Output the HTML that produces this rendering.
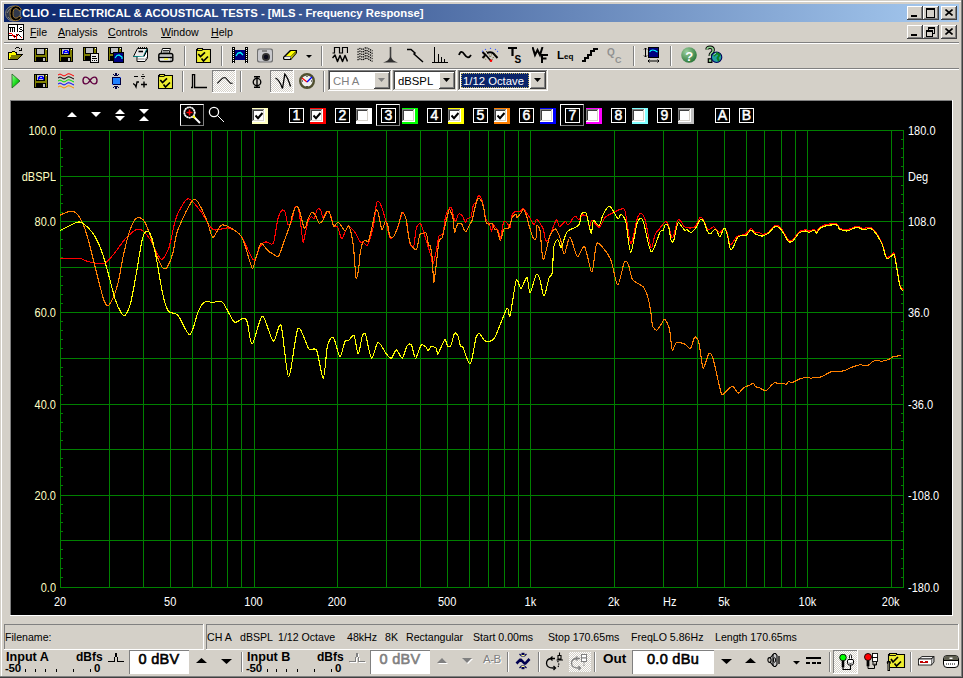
<!DOCTYPE html>
<html><head><meta charset="utf-8"><style>
html,body{margin:0;padding:0;}
body{width:963px;height:678px;overflow:hidden;position:relative;background:#D4D0C8;font-family:"Liberation Sans", sans-serif;}
svg text{font-family:"Liberation Sans", sans-serif;}
</style></head><body>
<div style="position:absolute;left:0px;top:0px;width:963px;height:678px;background:#D4D0C8;"></div><div style="position:absolute;left:1px;top:1px;width:960px;height:1px;background:#FFFFFF;"></div><div style="position:absolute;left:1px;top:1px;width:1px;height:675px;background:#FFFFFF;"></div><div style="position:absolute;left:961px;top:0px;width:1px;height:677px;background:#808080;"></div><div style="position:absolute;left:0px;top:676px;width:962px;height:1px;background:#808080;"></div><div style="position:absolute;left:962px;top:0px;width:1px;height:678px;background:#404040;"></div><div style="position:absolute;left:0px;top:677px;width:963px;height:1px;background:#404040;"></div><div style="position:absolute;left:4px;top:4px;width:955px;height:18px;background:#0A246A;background:linear-gradient(to right,#0A246A,#A6CAF0);"></div><svg style="position:absolute;left:5px;top:4px;shape-rendering:auto" width="18" height="18" viewBox="0 0 18 18" shape-rendering="crispEdges"><circle cx="8" cy="9.5" r="7.5" fill="#30384a" stroke="#7a7a78" stroke-width="1"/><path d="M3 13 Q6 17 12 16 M2 9 Q4 4 9 3" stroke="#9a9a90" fill="none" stroke-width="0.8"/><path d="M16.5 5.5 Q14 1.5 10.5 1.8 Q5 2.5 5 9.5 Q5 16.5 10.5 16.8 Q14 17 16.5 13.5 L14.2 12.2 Q13 14.2 10.8 14.2 Q8 14 8 9.5 Q8 4.8 10.8 4.5 Q13 4.6 14.2 6.8 Z" fill="#000" stroke="#a07830" stroke-width="1"/></svg><div style="position:absolute;left:22px;top:8px;font-size:11.3px;line-height:1;color:#fff;font-weight:bold;white-space:pre;letter-spacing:0px;">CLIO - ELECTRICAL &amp; ACOUSTICAL TESTS - [MLS - Frequency Response]</div><div style="position:absolute;left:907px;top:6px;width:16px;height:14px;background:#D4D0C8;"></div><div style="position:absolute;left:907px;top:6px;width:16px;height:1px;background:#FFFFFF;"></div><div style="position:absolute;left:907px;top:6px;width:1px;height:14px;background:#FFFFFF;"></div><div style="position:absolute;left:907px;top:19px;width:16px;height:1px;background:#404040;"></div><div style="position:absolute;left:922px;top:6px;width:1px;height:14px;background:#404040;"></div><div style="position:absolute;left:908px;top:18px;width:14px;height:1px;background:#808080;"></div><div style="position:absolute;left:921px;top:7px;width:1px;height:12px;background:#808080;"></div><div style="position:absolute;left:911px;top:15px;width:6px;height:2px;background:#000;"></div><div style="position:absolute;left:923px;top:6px;width:16px;height:14px;background:#D4D0C8;"></div><div style="position:absolute;left:923px;top:6px;width:16px;height:1px;background:#FFFFFF;"></div><div style="position:absolute;left:923px;top:6px;width:1px;height:14px;background:#FFFFFF;"></div><div style="position:absolute;left:923px;top:19px;width:16px;height:1px;background:#404040;"></div><div style="position:absolute;left:938px;top:6px;width:1px;height:14px;background:#404040;"></div><div style="position:absolute;left:924px;top:18px;width:14px;height:1px;background:#808080;"></div><div style="position:absolute;left:937px;top:7px;width:1px;height:12px;background:#808080;"></div><div style="position:absolute;left:926px;top:8px;width:7px;height:7px;border:1px solid #000;border-top-width:2px;"></div><div style="position:absolute;left:941px;top:6px;width:16px;height:14px;background:#D4D0C8;"></div><div style="position:absolute;left:941px;top:6px;width:16px;height:1px;background:#FFFFFF;"></div><div style="position:absolute;left:941px;top:6px;width:1px;height:14px;background:#FFFFFF;"></div><div style="position:absolute;left:941px;top:19px;width:16px;height:1px;background:#404040;"></div><div style="position:absolute;left:956px;top:6px;width:1px;height:14px;background:#404040;"></div><div style="position:absolute;left:942px;top:18px;width:14px;height:1px;background:#808080;"></div><div style="position:absolute;left:955px;top:7px;width:1px;height:12px;background:#808080;"></div><svg style="position:absolute;left:945px;top:9px;shape-rendering:auto" width="8" height="7" viewBox="0 0 8 7" shape-rendering="crispEdges"><path d="M0.5 0.5 L7.5 6.5 M7.5 0.5 L0.5 6.5" stroke="#000" stroke-width="1.6"/></svg><div style="position:absolute;left:907px;top:25px;width:16px;height:14px;background:#D4D0C8;"></div><div style="position:absolute;left:907px;top:25px;width:16px;height:1px;background:#FFFFFF;"></div><div style="position:absolute;left:907px;top:25px;width:1px;height:14px;background:#FFFFFF;"></div><div style="position:absolute;left:907px;top:38px;width:16px;height:1px;background:#404040;"></div><div style="position:absolute;left:922px;top:25px;width:1px;height:14px;background:#404040;"></div><div style="position:absolute;left:908px;top:37px;width:14px;height:1px;background:#808080;"></div><div style="position:absolute;left:921px;top:26px;width:1px;height:12px;background:#808080;"></div><div style="position:absolute;left:911px;top:34px;width:6px;height:2px;background:#000;"></div><div style="position:absolute;left:923px;top:25px;width:16px;height:14px;background:#D4D0C8;"></div><div style="position:absolute;left:923px;top:25px;width:16px;height:1px;background:#FFFFFF;"></div><div style="position:absolute;left:923px;top:25px;width:1px;height:14px;background:#FFFFFF;"></div><div style="position:absolute;left:923px;top:38px;width:16px;height:1px;background:#404040;"></div><div style="position:absolute;left:938px;top:25px;width:1px;height:14px;background:#404040;"></div><div style="position:absolute;left:924px;top:37px;width:14px;height:1px;background:#808080;"></div><div style="position:absolute;left:937px;top:26px;width:1px;height:12px;background:#808080;"></div><div style="position:absolute;left:928px;top:27px;width:5px;height:4px;border:1px solid #000;border-top-width:2px;"></div><div style="position:absolute;left:926px;top:30px;width:5px;height:4px;border:1px solid #000;border-top-width:2px;background:#D4D0C8"></div><div style="position:absolute;left:941px;top:25px;width:16px;height:14px;background:#D4D0C8;"></div><div style="position:absolute;left:941px;top:25px;width:16px;height:1px;background:#FFFFFF;"></div><div style="position:absolute;left:941px;top:25px;width:1px;height:14px;background:#FFFFFF;"></div><div style="position:absolute;left:941px;top:38px;width:16px;height:1px;background:#404040;"></div><div style="position:absolute;left:956px;top:25px;width:1px;height:14px;background:#404040;"></div><div style="position:absolute;left:942px;top:37px;width:14px;height:1px;background:#808080;"></div><div style="position:absolute;left:955px;top:26px;width:1px;height:12px;background:#808080;"></div><svg style="position:absolute;left:945px;top:28px;shape-rendering:auto" width="8" height="7" viewBox="0 0 8 7" shape-rendering="crispEdges"><path d="M0.5 0.5 L7.5 6.5 M7.5 0.5 L0.5 6.5" stroke="#000" stroke-width="1.6"/></svg><svg style="position:absolute;left:8px;top:24px;" width="16" height="16" viewBox="0 0 16 16" shape-rendering="crispEdges"><rect x="0" y="0" width="16" height="16" fill="#000"/><rect x="1" y="1" width="14" height="14" fill="#fff"/><rect x="1" y="3" width="6" height="1" fill="#000"/><rect x="2" y="3" width="1" height="5" fill="#000"/><rect x="4" y="4" width="1" height="4" fill="#000"/><rect x="6" y="4" width="1" height="4" fill="#000"/><rect x="9" y="1" width="1" height="7" fill="#000"/><rect x="12" y="3" width="2" height="1" fill="#000"/><rect x="11" y="4" width="1" height="1" fill="#000"/><rect x="12" y="5" width="2" height="1" fill="#000"/><rect x="14" y="6" width="1" height="1" fill="#000"/><rect x="11" y="7" width="3" height="1" fill="#000"/><rect x="1" y="9" width="3" height="1" fill="#f00"/><rect x="1" y="11" width="3" height="1" fill="#000"/><path d="M3.5 9.5 L7.5 14.5 M4 11.5 L6 11.5 L8 13" stroke="#f00" stroke-width="1" fill="none"/><rect x="8" y="10" width="1" height="5" fill="#f00"/><path d="M8.5 10.5 L10.5 12.5 M10 10 L13 13" stroke="#000" stroke-width="1" fill="none"/><rect x="9" y="10" width="1" height="1" fill="#f00"/><rect x="13" y="13" width="1" height="1" fill="#f00"/><rect x="6" y="12" width="2" height="1" fill="#000"/></svg><div style="position:absolute;left:30px;top:27px;font-size:10.6px;line-height:1;white-space:pre;"><u style="text-decoration-thickness:1px;text-underline-offset:1px">F</u>ile</div><div style="position:absolute;left:58px;top:27px;font-size:10.6px;line-height:1;white-space:pre;"><u style="text-decoration-thickness:1px;text-underline-offset:1px">A</u>nalysis</div><div style="position:absolute;left:108px;top:27px;font-size:10.6px;line-height:1;white-space:pre;"><u style="text-decoration-thickness:1px;text-underline-offset:1px">C</u>ontrols</div><div style="position:absolute;left:161px;top:27px;font-size:10.6px;line-height:1;white-space:pre;"><u style="text-decoration-thickness:1px;text-underline-offset:1px">W</u>indow</div><div style="position:absolute;left:211px;top:27px;font-size:10.6px;line-height:1;white-space:pre;"><u style="text-decoration-thickness:1px;text-underline-offset:1px">H</u>elp</div><div style="position:absolute;left:4px;top:42px;width:955px;height:1px;background:#808080;"></div><div style="position:absolute;left:4px;top:43px;width:955px;height:1px;background:#FFFFFF;"></div><svg style="position:absolute;left:8px;top:47px;" width="16" height="15" viewBox="0 0 16 15" shape-rendering="crispEdges"><path d="M7 2 Q9 0 11 1 L12 2 M11 3 L13 3 L13 1" stroke="#000" fill="none" stroke-width="1"/><path d="M0 5 H3 L4 4 H6 L7 5 H9 V7 H15 L10 13 H0 Z" fill="#000"/><path d="M1 6 H3 L4 5 H6 L7 6 H8 V7 L3 12 H1 Z" fill="#FFFF00"/><path d="M3 8 H14 L9.5 12 H2 Z" fill="#808000"/></svg><svg style="position:absolute;left:34px;top:48px;" width="15" height="15" viewBox="0 0 15 15" shape-rendering="crispEdges"><rect x="0" y="0" width="14" height="14" fill="#000"/><rect x="1" y="1" width="12" height="12" fill="#808000"/><rect x="2" y="0" width="9" height="7" fill="#000"/><rect x="3" y="1" width="7" height="5" fill="#C0C0C0"/><rect x="12" y="1" width="1" height="1" fill="#fff"/><rect x="2" y="9" width="10" height="5" fill="#000"/><rect x="9" y="10" width="2" height="3" fill="#C0C0C0"/></svg><svg style="position:absolute;left:59px;top:48px;" width="15" height="15" viewBox="0 0 15 15" shape-rendering="crispEdges"><rect x="0" y="0" width="14" height="14" fill="#000"/><rect x="1" y="1" width="12" height="12" fill="#808000"/><rect x="2" y="0" width="9" height="7" fill="#000"/><rect x="3" y="1" width="7" height="5" fill="#C0C0C0"/><rect x="12" y="1" width="1" height="1" fill="#fff"/><rect x="2" y="9" width="10" height="5" fill="#000"/><rect x="9" y="10" width="2" height="3" fill="#C0C0C0"/><path d="M4 6 V3 H5 V2 H8 V3 H9 V6 M4 4.5 H9" stroke="#0000FF" stroke-width="1" fill="none"/></svg><svg style="position:absolute;left:83px;top:47px;" width="15" height="15" viewBox="0 0 15 15" shape-rendering="crispEdges"><rect x="0" y="0" width="14" height="14" fill="#000"/><rect x="1" y="1" width="12" height="12" fill="#808000"/><rect x="2" y="0" width="9" height="7" fill="#000"/><rect x="3" y="1" width="7" height="5" fill="#C0C0C0"/><rect x="12" y="1" width="1" height="1" fill="#fff"/><rect x="2" y="9" width="10" height="5" fill="#000"/><rect x="9" y="10" width="2" height="3" fill="#C0C0C0"/></svg><svg style="position:absolute;left:90px;top:53px;" width="10" height="11" viewBox="0 0 10 11" shape-rendering="crispEdges"><rect x="0" y="0" width="9" height="10" fill="#000"/><rect x="1" y="1" width="7" height="8" fill="#E8E8E8"/><rect x="2" y="3" width="4" height="1" fill="#000"/><rect x="2" y="5" width="5" height="1" fill="#000"/><rect x="2" y="7" width="1" height="1" fill="#000"/><rect x="4" y="7" width="1" height="1" fill="#000"/><rect x="6" y="7" width="1" height="1" fill="#000"/></svg><svg style="position:absolute;left:108px;top:47px;" width="15" height="15" viewBox="0 0 15 15" shape-rendering="crispEdges"><rect x="0" y="0" width="14" height="14" fill="#000"/><rect x="1" y="1" width="12" height="12" fill="#808000"/><rect x="2" y="0" width="9" height="7" fill="#000"/><rect x="3" y="1" width="7" height="5" fill="#C0C0C0"/><rect x="12" y="1" width="1" height="1" fill="#fff"/><rect x="2" y="9" width="10" height="5" fill="#000"/><rect x="9" y="10" width="2" height="3" fill="#C0C0C0"/></svg><svg style="position:absolute;left:113px;top:52px;shape-rendering:auto" width="11" height="11" viewBox="0 0 11 11" shape-rendering="crispEdges"><rect x="0" y="0" width="11" height="11" fill="#000"/><rect x="1" y="1" width="9" height="9" fill="#000080"/><path d="M2 6 L4 3.5 L6 3 L9 5 V7" stroke="#00FFFF" fill="none" stroke-width="1.2"/></svg><svg style="position:absolute;left:133px;top:47px;shape-rendering:auto" width="16" height="16" viewBox="0 0 16 16" shape-rendering="crispEdges"><path d="M4.5 1.5 H14.5 L11 9.5 H0.5 Z" fill="#E8E8E8" stroke="#000" stroke-width="1"/><path d="M5 1 H14" stroke="#000" stroke-width="2" stroke-dasharray="1 1"/><path d="M5.5 4.5 H10" stroke="#000" stroke-width="1.6"/><path d="M0.5 9.5 H10.5 M14 2 L10.5 9.5" stroke="#008080" stroke-width="1.2"/><path d="M11 9.5 L14.5 2.5 V11 L12 14.5 H4 V10" fill="#fff" stroke="#000" stroke-width="1"/><path d="M4.5 12 H11.5" stroke="#808080"/><path d="M12 13 L14 10" stroke="#808080"/></svg><svg style="position:absolute;left:158px;top:48px;shape-rendering:auto" width="16" height="15" viewBox="0 0 16 15" shape-rendering="crispEdges"><path d="M4.5 0.5 H12.5 L11 5.5 H3 Z" fill="#fff" stroke="#000"/><path d="M5 2.5 H11 M4.5 4 H10.5" stroke="#000" stroke-width="0.8"/><rect x="0.8" y="5.5" width="14" height="8" rx="2" fill="#C0C0C0" stroke="#000" stroke-width="1.4"/><path d="M1 9.5 H14" stroke="#000" stroke-width="1.2"/><rect x="2" y="10.5" width="10" height="2" fill="#E8E8E8"/><rect x="6" y="10.5" width="4" height="1.2" fill="#FFFF00"/><path d="M13 6 V13" stroke="#808080" stroke-dasharray="1 1"/></svg><div style="position:absolute;left:184px;top:46px;width:1px;height:20px;background:#808080;"></div><div style="position:absolute;left:185px;top:46px;width:1px;height:20px;background:#FFFFFF;"></div><svg style="position:absolute;left:196px;top:48px;shape-rendering:auto" width="15" height="15" viewBox="0 0 15 15" shape-rendering="crispEdges"><path d="M0.5 1.5 V14.5 H14.5 V1.5 H6.5 V0.5 H1.5 V1.5 Z" fill="#EEEE30" stroke="#000" stroke-width="1.1"/><path d="M1 2.5 H6.5" stroke="#000" stroke-width="0.9"/><path d="M2.3 6 L4.5 8.5 L9 4.3 M5.5 10.5 L7.5 13 L12 8.5" stroke="#000" stroke-width="1.7" fill="none"/></svg><div style="position:absolute;left:221px;top:46px;width:1px;height:20px;background:#808080;"></div><div style="position:absolute;left:222px;top:46px;width:1px;height:20px;background:#FFFFFF;"></div><svg style="position:absolute;left:232px;top:47px;shape-rendering:auto" width="16" height="16" viewBox="0 0 16 16" shape-rendering="crispEdges"><rect x="0" y="0" width="3" height="16" fill="#000"/><rect x="13" y="0" width="3" height="16" fill="#000"/><rect x="1" y="1" width="1" height="1" fill="#fff"/><rect x="14" y="1" width="1" height="1" fill="#fff"/><rect x="1" y="3" width="1" height="1" fill="#fff"/><rect x="14" y="3" width="1" height="1" fill="#fff"/><rect x="1" y="5" width="1" height="1" fill="#fff"/><rect x="14" y="5" width="1" height="1" fill="#fff"/><rect x="1" y="7" width="1" height="1" fill="#fff"/><rect x="14" y="7" width="1" height="1" fill="#fff"/><rect x="1" y="9" width="1" height="1" fill="#fff"/><rect x="14" y="9" width="1" height="1" fill="#fff"/><rect x="1" y="11" width="1" height="1" fill="#fff"/><rect x="14" y="11" width="1" height="1" fill="#fff"/><rect x="1" y="13" width="1" height="1" fill="#fff"/><rect x="14" y="13" width="1" height="1" fill="#fff"/><rect x="1" y="15" width="1" height="1" fill="#fff"/><rect x="14" y="15" width="1" height="1" fill="#fff"/><rect x="3" y="3" width="10" height="10" fill="#000080"/><path d="M4 9 L6 6 L8.5 5.5 L11 8" stroke="#00FFFF" fill="none" stroke-width="1.3"/></svg><svg style="position:absolute;left:257px;top:48px;shape-rendering:auto" width="16" height="15" viewBox="0 0 16 15" shape-rendering="crispEdges"><rect x="0" y="0.5" width="16" height="14" rx="2" fill="#707070"/><rect x="1" y="1.5" width="14" height="12" rx="2" fill="#C8C8CC"/><rect x="5" y="2" width="5" height="2" fill="#888"/><circle cx="9" cy="9" r="4" fill="#333"/><circle cx="9" cy="9" r="2.2" fill="#0a0a1a"/></svg><svg style="position:absolute;left:282px;top:49px;shape-rendering:auto" width="16" height="12" viewBox="0 0 16 12" shape-rendering="crispEdges"><path d="M1 8 L8 1 H15 L15 4 L9 11 H2 L1 10 Z" fill="#000"/><path d="M4 7 L9 2 H14 L9 7 Z" fill="#FFFF00"/><path d="M2 8.5 L4 7.5 H9 L8 10 H2.5 Z" fill="#E8E8E8"/><path d="M9 7 L14 3 V4 L9 10 Z" fill="#C0C000"/></svg><svg style="position:absolute;left:306px;top:55px;shape-rendering:auto" width="6" height="3" viewBox="0 0 6 3" shape-rendering="crispEdges"><path d="M0 0 H6 L3 3 Z" fill="#000"/></svg><div style="position:absolute;left:321px;top:46px;width:1px;height:20px;background:#808080;"></div><div style="position:absolute;left:322px;top:46px;width:1px;height:20px;background:#FFFFFF;"></div><svg style="position:absolute;left:332px;top:47px;shape-rendering:auto" width="16" height="16" viewBox="0 0 16 16" shape-rendering="crispEdges"><path d="M0.5 6 H2.5 V0.5 H7.5 V6 H10.5 V0.5 H15.5 V6" stroke="#000" fill="none" stroke-width="1.2"/><path d="M0.5 11 L3 8 L5.5 14.5 L8 8.5 L10.5 14.5 L13 8.5 L15.5 14.5" stroke="#000" fill="none" stroke-width="1.5" stroke-linejoin="round"/></svg><svg style="position:absolute;left:357px;top:47px;shape-rendering:auto" width="16" height="16" viewBox="0 0 16 16" shape-rendering="crispEdges"><path d="M0.5 2.5 L3 1.5 L6 2.5 L9 0.5 L12 2.0 L15.5 4.0" stroke="#000" fill="none" stroke-dasharray="1.2 0.8" stroke-width="1.3"/><path d="M0.5 5.1 L3 4.1 L6 5.1 L9 3.1 L12 4.6 L15.5 6.6" stroke="#000" fill="none" stroke-dasharray="1.2 0.8" stroke-width="1.3"/><path d="M0.5 7.7 L3 6.7 L6 7.7 L9 5.7 L12 7.2 L15.5 9.2" stroke="#000" fill="none" stroke-dasharray="1.2 0.8" stroke-width="1.3"/><path d="M0.5 10.3 L3 9.3 L6 10.3 L9 8.3 L12 9.8 L15.5 11.8" stroke="#000" fill="none" stroke-dasharray="1.2 0.8" stroke-width="1.3"/><path d="M0.5 12.9 L3 11.9 L6 12.9 L9 10.9 L12 12.4 L15.5 14.4" stroke="#000" fill="none" stroke-dasharray="1.2 0.8" stroke-width="1.3"/></svg><svg style="position:absolute;left:383px;top:47px;shape-rendering:auto" width="15" height="16" viewBox="0 0 15 16" shape-rendering="crispEdges"><path d="M7.5 0 V13" stroke="#404040" stroke-width="1.6"/><path d="M0 15.5 Q6 14 7.5 9 Q9 14 15 15.5 Z" fill="#303030"/></svg><svg style="position:absolute;left:407px;top:48px;shape-rendering:auto" width="17" height="15" viewBox="0 0 17 15" shape-rendering="crispEdges"><path d="M0 1.5 H4 L8 5 L7 6 L16 14" stroke="#000" fill="none" stroke-width="1.5"/></svg><svg style="position:absolute;left:432px;top:47px;" width="16" height="16" viewBox="0 0 16 16" shape-rendering="crispEdges"><path d="M2.5 0 V15 M0 15.5 H16 M6.5 7 V15 M9.5 10 V15 M12.5 12 V15" stroke="#000" fill="none"/></svg><svg style="position:absolute;left:458px;top:50px;shape-rendering:auto" width="14" height="10" viewBox="0 0 14 10" shape-rendering="crispEdges"><path d="M1 5 Q3 -1 6.5 4.5 T13 5" stroke="#000" fill="none" stroke-width="1.8"/></svg><svg style="position:absolute;left:478px;top:44px;shape-rendering:auto" width="22" height="20" viewBox="0 0 22 20" shape-rendering="crispEdges"><path d="M4.5 8 L7 10.5 M4.5 14 L7.5 11 M9 9 Q12 7.5 15 9 M15 9 L19.5 14" stroke="#000" stroke-width="2" fill="none"/><path d="M7 10 L13 17" stroke="#000" stroke-width="1.6"/><path d="M6 13 L8 16 M8.5 7 V9 M11 10.5 L12 13 M13.5 10.5 L12.5 13 M17 10 L18 12 M15.5 13 L14 16" stroke="#505020" stroke-width="1" stroke-dasharray="1 1"/><circle cx="13" cy="16.8" r="1.3" fill="#f00"/><circle cx="4.5" cy="7.3" r="0.7" fill="#4060ff"/><circle cx="7.5" cy="5.5" r="0.7" fill="#4060ff"/><circle cx="12.5" cy="4.4" r="0.7" fill="#4060ff"/><circle cx="17.5" cy="5.5" r="0.7" fill="#4060ff"/><circle cx="19.5" cy="7.5" r="0.7" fill="#4060ff"/></svg><svg style="position:absolute;left:508px;top:47px;shape-rendering:auto" width="16" height="16" viewBox="0 0 16 16" shape-rendering="crispEdges"><path d="M0 1 H9 M4.5 1 V9" stroke="#000" stroke-width="2.2" fill="none"/><text x="6.5" y="16" font-family="Liberation Sans" font-weight="bold" font-size="10" fill="#000">S</text></svg><svg style="position:absolute;left:532px;top:47px;shape-rendering:auto" width="17" height="17" viewBox="0 0 17 17" shape-rendering="crispEdges"><path d="M0.5 0 L3 8 L5.5 3 L8 8 L10.5 0" stroke="#000" stroke-width="2" fill="none"/><path d="M10 16 V8 H16 M10 11.5 H14.5" stroke="#000" stroke-width="2" fill="none"/></svg><svg style="position:absolute;left:557px;top:49px;shape-rendering:auto" width="17" height="13" viewBox="0 0 17 13" shape-rendering="crispEdges"><text x="0" y="10" font-family="Liberation Sans" font-weight="bold" font-size="11.5" fill="#000">L</text><text x="7" y="10" font-family="Liberation Sans" font-weight="bold" font-size="8" fill="#000">eq</text></svg><svg style="position:absolute;left:582px;top:48px;" width="16" height="15" viewBox="0 0 16 15" shape-rendering="crispEdges"><path d="M0 13 H3 V10 H6 V6.5 H9 V3 H12 V1 H16" stroke="#000" stroke-width="2" fill="none"/></svg><svg style="position:absolute;left:607px;top:47px;shape-rendering:auto" width="16" height="17" viewBox="0 0 16 17" shape-rendering="crispEdges"><text x="0" y="9" font-family="Liberation Sans" font-weight="bold" font-size="10" fill="#909090">Q</text><text x="8" y="16" font-family="Liberation Sans" font-weight="bold" font-size="9" fill="#909090">C</text></svg><div style="position:absolute;left:633px;top:46px;width:1px;height:20px;background:#808080;"></div><div style="position:absolute;left:634px;top:46px;width:1px;height:20px;background:#FFFFFF;"></div><svg style="position:absolute;left:643px;top:47px;shape-rendering:auto" width="17" height="16" viewBox="0 0 17 16" shape-rendering="crispEdges"><rect x="5" y="0" width="11" height="11" fill="#000"/><rect x="6" y="1" width="9" height="9" fill="#000080"/><path d="M6.5 5 Q9 1 14.5 5" stroke="#00FFFF" fill="none" stroke-width="1.2"/><path d="M2.5 1 V10 M1 2.5 L2.5 1 L4 2.5 M1 8.5 L2.5 10 L4 8.5" stroke="#000" fill="none"/><path d="M5 14 H16 M6.5 12.5 L5 14 L6.5 15.5 M14.5 12.5 L16 14 L14.5 15.5" stroke="#000" fill="none"/></svg><div style="position:absolute;left:670px;top:46px;width:1px;height:20px;background:#808080;"></div><div style="position:absolute;left:671px;top:46px;width:1px;height:20px;background:#FFFFFF;"></div><svg style="position:absolute;left:681px;top:47px;shape-rendering:auto" width="16" height="16" viewBox="0 0 16 16" shape-rendering="crispEdges"><defs><radialGradient id="hg" cx="0.35" cy="0.3" r="0.8"><stop offset="0" stop-color="#9ed09e"/><stop offset="1" stop-color="#1f6f2f"/></radialGradient></defs><circle cx="8" cy="8" r="7.8" fill="url(#hg)"/><text x="4.2" y="13.5" font-family="Liberation Sans" font-weight="bold" font-size="13" fill="#fff">?</text></svg><svg style="position:absolute;left:702px;top:44px;shape-rendering:auto" width="22" height="20" viewBox="0 0 22 20" shape-rendering="crispEdges"><path d="M5 5.5 Q5 3.2 8 3.2 Q11.2 3.2 11.2 6 Q11.2 8 9 9.5 Q8.2 10.2 8.2 12" stroke="#000" stroke-width="3.4" fill="none"/><path d="M5 5.5 Q5 3.2 8 3.2 Q11.2 3.2 11.2 6 Q11.2 8 9 9.5 Q8.2 10.2 8.2 12" stroke="#90D090" stroke-width="1.6" fill="none"/><rect x="6.3" y="14.8" width="3.6" height="3.6" fill="#90D090" stroke="#000" stroke-width="1.2"/><circle cx="14.6" cy="13.3" r="5.2" fill="#20A0A0" stroke="#000060" stroke-width="1.1"/><path d="M11.5 12 L15 9 L17.5 11 L15.5 14 L17 17" stroke="#108020" stroke-width="2" fill="none"/><path d="M11.5 11 L14 9" stroke="#C0E0FF" stroke-width="0.8"/></svg><div style="position:absolute;left:4px;top:68px;width:955px;height:1px;background:#808080;"></div><div style="position:absolute;left:4px;top:69px;width:955px;height:1px;background:#FFFFFF;"></div><svg style="position:absolute;left:11px;top:73px;shape-rendering:auto" width="11" height="16" viewBox="0 0 11 16" shape-rendering="crispEdges"><defs><linearGradient id="pg" x1="0" y1="0" x2="1" y2="1"><stop offset="0" stop-color="#A0FFA0"/><stop offset="0.5" stop-color="#20E020"/><stop offset="1" stop-color="#008000"/></linearGradient></defs><path d="M1 1 L9 8 L1 15 Z" fill="url(#pg)" stroke="#206020" stroke-width="0.8"/></svg><svg style="position:absolute;left:34px;top:74px;" width="15" height="15" viewBox="0 0 15 15" shape-rendering="crispEdges"><rect x="0" y="0" width="14" height="14" fill="#000"/><rect x="1" y="1" width="12" height="12" fill="#808000"/><rect x="2" y="0" width="9" height="7" fill="#000"/><rect x="3" y="1" width="7" height="5" fill="#C0C0C0"/><rect x="12" y="1" width="1" height="1" fill="#fff"/><rect x="2" y="9" width="10" height="5" fill="#000"/><rect x="9" y="10" width="2" height="3" fill="#C0C0C0"/><path d="M4 6 V3 H5 V2 H8 V3 H9 V6 M4 4.5 H9" stroke="#0000FF" stroke-width="1" fill="none"/></svg><svg style="position:absolute;left:58px;top:73px;shape-rendering:auto" width="16" height="16" viewBox="0 0 16 16" shape-rendering="crispEdges"><path d="M0 2 Q2 0 4 2 T8 2 T12 1 T16 3" stroke="#FF0000" fill="none" stroke-width="1"/><path d="M0 5 Q2 3 4 5 T8 5 T12 4 T16 6" stroke="#000000" fill="none" stroke-width="1"/><path d="M0 8 Q2 6 4 8 T8 8 T12 7 T16 9" stroke="#00E000" fill="none" stroke-width="1"/><path d="M0 11 Q2 9 4 11 T8 11 T12 10 T16 12" stroke="#0000FF" fill="none" stroke-width="1"/><path d="M0 14 Q2 12 4 14 T8 14 T12 13 T16 15" stroke="#FF9000" fill="none" stroke-width="1"/></svg><svg style="position:absolute;left:82px;top:75px;shape-rendering:auto" width="16" height="11" viewBox="0 0 16 11" shape-rendering="crispEdges"><path d="M8 5.5 C5 0.5 1 1.5 1 5.5 C1 9.5 5 10.5 8 5.5 C11 0.5 15 1.5 15 5.5 C15 9.5 11 10.5 8 5.5 Z" stroke="#600040" fill="none" stroke-width="1.4"/></svg><svg style="position:absolute;left:111px;top:72px;" width="11" height="18" viewBox="0 0 11 18" shape-rendering="crispEdges"><rect x="4" y="1" width="2" height="2" fill="#000040"/><rect x="2" y="2" width="1" height="1" fill="#000040"/><rect x="7" y="2" width="1" height="1" fill="#000040"/><rect x="3" y="3" width="4" height="1" fill="#000040"/><rect x="1" y="5" width="9" height="8" fill="#000040"/><rect x="2" y="6" width="7" height="6" fill="#2080FF"/><rect x="9" y="5" width="1" height="1" fill="#4060FF"/><rect x="1" y="12" width="1" height="1" fill="#4060FF"/><rect x="3" y="14" width="4" height="1" fill="#000040"/><rect x="2" y="15" width="1" height="1" fill="#000040"/><rect x="7" y="15" width="1" height="1" fill="#000040"/><rect x="4" y="15" width="2" height="2" fill="#000040"/></svg><svg style="position:absolute;left:133px;top:74px;shape-rendering:auto" width="15" height="15" viewBox="0 0 15 15" shape-rendering="crispEdges"><path d="M1 2.5 H5 M8 2.5 H12 M10 0 V1 M10 4 V5" stroke="#000" stroke-width="1.2"/><path d="M0 9.5 L2 11 L3 13 L4 8 H6" stroke="#000" stroke-width="1.3" fill="none"/><path d="M8 10.5 H14 M11 7.5 V13.5" stroke="#000" stroke-width="1.4"/></svg><svg style="position:absolute;left:158px;top:74px;shape-rendering:auto" width="15" height="15" viewBox="0 0 15 15" shape-rendering="crispEdges"><path d="M0.5 1.5 V14.5 H14.5 V1.5 H6.5 V0.5 H1.5 V1.5 Z" fill="#EEEE30" stroke="#000" stroke-width="1.1"/><path d="M1 2.5 H6.5" stroke="#000" stroke-width="0.9"/><path d="M2.3 6 L4.5 8.5 L9 4.3 M5.5 10.5 L7.5 13 L12 8.5" stroke="#000" stroke-width="1.7" fill="none"/></svg><div style="position:absolute;left:182px;top:71px;width:1px;height:21px;background:#808080;"></div><div style="position:absolute;left:183px;top:71px;width:1px;height:21px;background:#FFFFFF;"></div><svg style="position:absolute;left:191px;top:74px;shape-rendering:auto" width="17" height="15" viewBox="0 0 17 15" shape-rendering="crispEdges"><path d="M0 13.5 H1.5 V0.7 H3.6 V13.5 H16" stroke="#000" fill="none" stroke-width="1.3"/></svg><div style="position:absolute;left:212px;top:70px;width:24px;height:23px;background:#D4D0C8;background-image:repeating-conic-gradient(#fff 0 25%,#D4D0C8 0 50%);background-size:2px 2px;"></div><div style="position:absolute;left:212px;top:70px;width:24px;height:1px;background:#808080;"></div><div style="position:absolute;left:212px;top:70px;width:1px;height:23px;background:#808080;"></div><div style="position:absolute;left:212px;top:92px;width:24px;height:1px;background:#FFFFFF;"></div><div style="position:absolute;left:235px;top:70px;width:1px;height:23px;background:#FFFFFF;"></div><svg style="position:absolute;left:216px;top:74px;shape-rendering:auto" width="18" height="12" viewBox="0 0 18 12" shape-rendering="crispEdges"><path d="M1.3 9.3 L6.5 4.2 L7.5 3.7 L9.5 3.7 L14.5 9.3 L16.6 9.3" stroke="#000" fill="none" stroke-width="1.1"/></svg><div style="position:absolute;left:240px;top:71px;width:1px;height:21px;background:#808080;"></div><div style="position:absolute;left:241px;top:71px;width:1px;height:21px;background:#FFFFFF;"></div><svg style="position:absolute;left:252px;top:76px;shape-rendering:auto" width="10" height="12" viewBox="0 0 10 12" shape-rendering="crispEdges"><path d="M2 0.7 H8 M2 11.3 H8 M5 0 V12" stroke="#000" stroke-width="1.4"/><ellipse cx="5" cy="6" rx="3.8" ry="3.6" stroke="#000" fill="none" stroke-width="1.3"/></svg><div style="position:absolute;left:270px;top:70px;width:24px;height:23px;background:#D4D0C8;background-image:repeating-conic-gradient(#fff 0 25%,#D4D0C8 0 50%);background-size:2px 2px;"></div><div style="position:absolute;left:270px;top:70px;width:24px;height:1px;background:#808080;"></div><div style="position:absolute;left:270px;top:70px;width:1px;height:23px;background:#808080;"></div><div style="position:absolute;left:270px;top:92px;width:24px;height:1px;background:#FFFFFF;"></div><div style="position:absolute;left:293px;top:70px;width:1px;height:23px;background:#FFFFFF;"></div><svg style="position:absolute;left:274px;top:73px;shape-rendering:auto" width="18" height="17" viewBox="0 0 18 17" shape-rendering="crispEdges"><path d="M1.5 5 Q5.5 7 8.5 15.5 L10.8 1.2 Q14 5 16.5 13.5" stroke="#000" fill="none" stroke-width="1.3"/></svg><svg style="position:absolute;left:299px;top:73px;shape-rendering:auto" width="16" height="16" viewBox="0 0 16 16" shape-rendering="crispEdges"><circle cx="8" cy="8" r="6.8" fill="#F0F0F0" stroke="#505030" stroke-width="2.4"/><path d="M3 5 L8 9" stroke="#f00" stroke-width="1.2"/><path d="M8 9 L13 4" stroke="#00f" stroke-width="1.2"/><path d="M8 3 V4 M8 13 V14 M3 8 H4 M12 8 H13" stroke="#000"/></svg><div style="position:absolute;left:323px;top:71px;width:1px;height:21px;background:#808080;"></div><div style="position:absolute;left:324px;top:71px;width:1px;height:21px;background:#FFFFFF;"></div><div style="position:absolute;left:328px;top:70px;width:64px;height:21px;background:#fff;"></div><div style="position:absolute;left:328px;top:70px;width:64px;height:1px;background:#808080;"></div><div style="position:absolute;left:328px;top:70px;width:1px;height:21px;background:#808080;"></div><div style="position:absolute;left:329px;top:71px;width:62px;height:1px;background:#404040;"></div><div style="position:absolute;left:329px;top:71px;width:1px;height:19px;background:#404040;"></div><div style="position:absolute;left:328px;top:90px;width:64px;height:1px;background:#FFFFFF;"></div><div style="position:absolute;left:391px;top:70px;width:1px;height:21px;background:#FFFFFF;"></div><div style="position:absolute;left:329px;top:89px;width:62px;height:1px;background:#D4D0C8;"></div><div style="position:absolute;left:390px;top:71px;width:1px;height:19px;background:#D4D0C8;"></div><div style="position:absolute;left:374px;top:72px;width:16px;height:17px;background:#D4D0C8;"></div><div style="position:absolute;left:374px;top:72px;width:16px;height:1px;background:#FFFFFF;"></div><div style="position:absolute;left:374px;top:72px;width:1px;height:17px;background:#FFFFFF;"></div><div style="position:absolute;left:374px;top:88px;width:16px;height:1px;background:#404040;"></div><div style="position:absolute;left:389px;top:72px;width:1px;height:17px;background:#404040;"></div><div style="position:absolute;left:375px;top:87px;width:14px;height:1px;background:#808080;"></div><div style="position:absolute;left:388px;top:73px;width:1px;height:15px;background:#808080;"></div><svg style="position:absolute;left:378px;top:78px;shape-rendering:auto" width="7" height="4" viewBox="0 0 7 4" shape-rendering="crispEdges"><path d="M0 0 H7 L3.5 4 Z" fill="#808080"/></svg><div style="position:absolute;left:333px;top:76px;font-size:11.3px;line-height:1;color:#808080;font-weight:normal;white-space:pre;">CH A</div><div style="position:absolute;left:393px;top:70px;width:64px;height:21px;background:#fff;"></div><div style="position:absolute;left:393px;top:70px;width:64px;height:1px;background:#808080;"></div><div style="position:absolute;left:393px;top:70px;width:1px;height:21px;background:#808080;"></div><div style="position:absolute;left:394px;top:71px;width:62px;height:1px;background:#404040;"></div><div style="position:absolute;left:394px;top:71px;width:1px;height:19px;background:#404040;"></div><div style="position:absolute;left:393px;top:90px;width:64px;height:1px;background:#FFFFFF;"></div><div style="position:absolute;left:456px;top:70px;width:1px;height:21px;background:#FFFFFF;"></div><div style="position:absolute;left:394px;top:89px;width:62px;height:1px;background:#D4D0C8;"></div><div style="position:absolute;left:455px;top:71px;width:1px;height:19px;background:#D4D0C8;"></div><div style="position:absolute;left:439px;top:72px;width:16px;height:17px;background:#D4D0C8;"></div><div style="position:absolute;left:439px;top:72px;width:16px;height:1px;background:#FFFFFF;"></div><div style="position:absolute;left:439px;top:72px;width:1px;height:17px;background:#FFFFFF;"></div><div style="position:absolute;left:439px;top:88px;width:16px;height:1px;background:#404040;"></div><div style="position:absolute;left:454px;top:72px;width:1px;height:17px;background:#404040;"></div><div style="position:absolute;left:440px;top:87px;width:14px;height:1px;background:#808080;"></div><div style="position:absolute;left:453px;top:73px;width:1px;height:15px;background:#808080;"></div><svg style="position:absolute;left:443px;top:78px;shape-rendering:auto" width="7" height="4" viewBox="0 0 7 4" shape-rendering="crispEdges"><path d="M0 0 H7 L3.5 4 Z" fill="#000"/></svg><div style="position:absolute;left:398px;top:76px;font-size:11.3px;line-height:1;color:#000;font-weight:normal;white-space:pre;">dBSPL</div><div style="position:absolute;left:458px;top:70px;width:90px;height:21px;background:#fff;"></div><div style="position:absolute;left:458px;top:70px;width:90px;height:1px;background:#808080;"></div><div style="position:absolute;left:458px;top:70px;width:1px;height:21px;background:#808080;"></div><div style="position:absolute;left:459px;top:71px;width:88px;height:1px;background:#404040;"></div><div style="position:absolute;left:459px;top:71px;width:1px;height:19px;background:#404040;"></div><div style="position:absolute;left:458px;top:90px;width:90px;height:1px;background:#FFFFFF;"></div><div style="position:absolute;left:547px;top:70px;width:1px;height:21px;background:#FFFFFF;"></div><div style="position:absolute;left:459px;top:89px;width:88px;height:1px;background:#D4D0C8;"></div><div style="position:absolute;left:546px;top:71px;width:1px;height:19px;background:#D4D0C8;"></div><div style="position:absolute;left:530px;top:72px;width:16px;height:17px;background:#D4D0C8;"></div><div style="position:absolute;left:530px;top:72px;width:16px;height:1px;background:#FFFFFF;"></div><div style="position:absolute;left:530px;top:72px;width:1px;height:17px;background:#FFFFFF;"></div><div style="position:absolute;left:530px;top:88px;width:16px;height:1px;background:#404040;"></div><div style="position:absolute;left:545px;top:72px;width:1px;height:17px;background:#404040;"></div><div style="position:absolute;left:531px;top:87px;width:14px;height:1px;background:#808080;"></div><div style="position:absolute;left:544px;top:73px;width:1px;height:15px;background:#808080;"></div><svg style="position:absolute;left:534px;top:78px;shape-rendering:auto" width="7" height="4" viewBox="0 0 7 4" shape-rendering="crispEdges"><path d="M0 0 H7 L3.5 4 Z" fill="#000"/></svg><div style="position:absolute;left:461px;top:73px;width:68px;height:15px;background:#0A246A;outline:1px dotted #c8b860;outline-offset:-1px;"></div><div style="position:absolute;left:463px;top:76px;font-size:11.3px;line-height:1;color:#fff;font-weight:normal;white-space:pre;">1/12 Octave</div><div style="position:absolute;left:10px;top:100px;width:943px;height:516px;background:#000;"></div><div style="position:absolute;left:10px;top:100px;width:943px;height:1px;background:#808080;"></div><div style="position:absolute;left:10px;top:100px;width:1px;height:516px;background:#808080;"></div><div style="position:absolute;left:10px;top:615px;width:943px;height:1px;background:#FFFFFF;"></div><div style="position:absolute;left:952px;top:100px;width:1px;height:516px;background:#FFFFFF;"></div><svg style="position:absolute;left:0;top:0" width="963" height="678" viewBox="0 0 963 678"><g shape-rendering="crispEdges"><rect x="60" y="130" width="1" height="458" fill="#008000"/><rect x="109" y="130" width="1" height="458" fill="#008000"/><rect x="143" y="130" width="1" height="458" fill="#008000"/><rect x="170" y="130" width="1" height="458" fill="#008000"/><rect x="192" y="130" width="1" height="458" fill="#008000"/><rect x="211" y="130" width="1" height="458" fill="#008000"/><rect x="227" y="130" width="1" height="458" fill="#008000"/><rect x="241" y="130" width="1" height="458" fill="#008000"/><rect x="254" y="130" width="1" height="458" fill="#008000"/><rect x="337" y="130" width="1" height="458" fill="#008000"/><rect x="386" y="130" width="1" height="458" fill="#008000"/><rect x="420" y="130" width="1" height="458" fill="#008000"/><rect x="447" y="130" width="1" height="458" fill="#008000"/><rect x="469" y="130" width="1" height="458" fill="#008000"/><rect x="488" y="130" width="1" height="458" fill="#008000"/><rect x="504" y="130" width="1" height="458" fill="#008000"/><rect x="518" y="130" width="1" height="458" fill="#008000"/><rect x="530" y="130" width="1" height="458" fill="#008000"/><rect x="614" y="130" width="1" height="458" fill="#008000"/><rect x="663" y="130" width="1" height="458" fill="#008000"/><rect x="697" y="130" width="1" height="458" fill="#008000"/><rect x="724" y="130" width="1" height="458" fill="#008000"/><rect x="746" y="130" width="1" height="458" fill="#008000"/><rect x="764" y="130" width="1" height="458" fill="#008000"/><rect x="781" y="130" width="1" height="458" fill="#008000"/><rect x="795" y="130" width="1" height="458" fill="#008000"/><rect x="807" y="130" width="1" height="458" fill="#008000"/><rect x="891" y="130" width="1" height="458" fill="#008000"/><rect x="903" y="130" width="1" height="458" fill="#008000"/><rect x="60" y="130" width="844" height="1" fill="#008000"/><rect x="60" y="176" width="844" height="1" fill="#008000"/><rect x="60" y="221" width="844" height="1" fill="#008000"/><rect x="60" y="267" width="844" height="1" fill="#008000"/><rect x="60" y="312" width="844" height="1" fill="#008000"/><rect x="60" y="358" width="844" height="1" fill="#008000"/><rect x="60" y="404" width="844" height="1" fill="#008000"/><rect x="60" y="449" width="844" height="1" fill="#008000"/><rect x="60" y="495" width="844" height="1" fill="#008000"/><rect x="60" y="540" width="844" height="1" fill="#008000"/><rect x="60" y="587" width="844" height="1" fill="#008000"/><rect x="61" y="139" width="2" height="1" fill="#008000"/><rect x="901" y="139" width="2" height="1" fill="#008000"/><rect x="61" y="148" width="2" height="1" fill="#008000"/><rect x="901" y="148" width="2" height="1" fill="#008000"/><rect x="61" y="157" width="2" height="1" fill="#008000"/><rect x="901" y="157" width="2" height="1" fill="#008000"/><rect x="61" y="166" width="2" height="1" fill="#008000"/><rect x="901" y="166" width="2" height="1" fill="#008000"/><rect x="61" y="185" width="2" height="1" fill="#008000"/><rect x="901" y="185" width="2" height="1" fill="#008000"/><rect x="61" y="194" width="2" height="1" fill="#008000"/><rect x="901" y="194" width="2" height="1" fill="#008000"/><rect x="61" y="203" width="2" height="1" fill="#008000"/><rect x="901" y="203" width="2" height="1" fill="#008000"/><rect x="61" y="212" width="2" height="1" fill="#008000"/><rect x="901" y="212" width="2" height="1" fill="#008000"/><rect x="61" y="230" width="2" height="1" fill="#008000"/><rect x="901" y="230" width="2" height="1" fill="#008000"/><rect x="61" y="239" width="2" height="1" fill="#008000"/><rect x="901" y="239" width="2" height="1" fill="#008000"/><rect x="61" y="248" width="2" height="1" fill="#008000"/><rect x="901" y="248" width="2" height="1" fill="#008000"/><rect x="61" y="257" width="2" height="1" fill="#008000"/><rect x="901" y="257" width="2" height="1" fill="#008000"/><rect x="61" y="276" width="2" height="1" fill="#008000"/><rect x="901" y="276" width="2" height="1" fill="#008000"/><rect x="61" y="285" width="2" height="1" fill="#008000"/><rect x="901" y="285" width="2" height="1" fill="#008000"/><rect x="61" y="294" width="2" height="1" fill="#008000"/><rect x="901" y="294" width="2" height="1" fill="#008000"/><rect x="61" y="303" width="2" height="1" fill="#008000"/><rect x="901" y="303" width="2" height="1" fill="#008000"/><rect x="61" y="321" width="2" height="1" fill="#008000"/><rect x="901" y="321" width="2" height="1" fill="#008000"/><rect x="61" y="330" width="2" height="1" fill="#008000"/><rect x="901" y="330" width="2" height="1" fill="#008000"/><rect x="61" y="339" width="2" height="1" fill="#008000"/><rect x="901" y="339" width="2" height="1" fill="#008000"/><rect x="61" y="348" width="2" height="1" fill="#008000"/><rect x="901" y="348" width="2" height="1" fill="#008000"/><rect x="61" y="367" width="2" height="1" fill="#008000"/><rect x="901" y="367" width="2" height="1" fill="#008000"/><rect x="61" y="376" width="2" height="1" fill="#008000"/><rect x="901" y="376" width="2" height="1" fill="#008000"/><rect x="61" y="385" width="2" height="1" fill="#008000"/><rect x="901" y="385" width="2" height="1" fill="#008000"/><rect x="61" y="394" width="2" height="1" fill="#008000"/><rect x="901" y="394" width="2" height="1" fill="#008000"/><rect x="61" y="413" width="2" height="1" fill="#008000"/><rect x="901" y="413" width="2" height="1" fill="#008000"/><rect x="61" y="422" width="2" height="1" fill="#008000"/><rect x="901" y="422" width="2" height="1" fill="#008000"/><rect x="61" y="431" width="2" height="1" fill="#008000"/><rect x="901" y="431" width="2" height="1" fill="#008000"/><rect x="61" y="440" width="2" height="1" fill="#008000"/><rect x="901" y="440" width="2" height="1" fill="#008000"/><rect x="61" y="458" width="2" height="1" fill="#008000"/><rect x="901" y="458" width="2" height="1" fill="#008000"/><rect x="61" y="467" width="2" height="1" fill="#008000"/><rect x="901" y="467" width="2" height="1" fill="#008000"/><rect x="61" y="476" width="2" height="1" fill="#008000"/><rect x="901" y="476" width="2" height="1" fill="#008000"/><rect x="61" y="485" width="2" height="1" fill="#008000"/><rect x="901" y="485" width="2" height="1" fill="#008000"/><rect x="61" y="504" width="2" height="1" fill="#008000"/><rect x="901" y="504" width="2" height="1" fill="#008000"/><rect x="61" y="513" width="2" height="1" fill="#008000"/><rect x="901" y="513" width="2" height="1" fill="#008000"/><rect x="61" y="522" width="2" height="1" fill="#008000"/><rect x="901" y="522" width="2" height="1" fill="#008000"/><rect x="61" y="531" width="2" height="1" fill="#008000"/><rect x="901" y="531" width="2" height="1" fill="#008000"/><rect x="61" y="549" width="2" height="1" fill="#008000"/><rect x="901" y="549" width="2" height="1" fill="#008000"/><rect x="61" y="558" width="2" height="1" fill="#008000"/><rect x="901" y="558" width="2" height="1" fill="#008000"/><rect x="61" y="568" width="2" height="1" fill="#008000"/><rect x="901" y="568" width="2" height="1" fill="#008000"/><rect x="61" y="577" width="2" height="1" fill="#008000"/><rect x="901" y="577" width="2" height="1" fill="#008000"/></g><g clip-path="url(#gc)" shape-rendering="crispEdges"><path d="M60.3 258.3 C62.8 258.3 75.6 257.9 79.1 258.3 C82.6 258.7 84.5 260.4 86.8 261.1 C89.1 261.8 93.9 263.1 96.3 263.4 C98.7 263.7 102.7 264.2 105.0 263.0 C107.3 261.8 110.9 257.6 113.6 254.4 C116.3 251.2 122.0 242.4 125.1 239.1 C128.2 235.8 134.3 230.6 136.6 229.5 C138.9 228.4 140.5 229.2 142.3 230.5 C144.1 231.8 147.9 235.9 150.0 239.1 C152.1 242.3 156.0 251.7 157.7 254.4 C159.4 257.1 161.0 260.2 162.5 259.2 C164.0 258.2 167.7 251.3 169.2 246.8 C170.7 242.3 172.8 230.2 174.0 225.7 C175.2 221.2 176.1 216.8 178.0 213.2 C179.9 209.6 185.1 198.9 188.1 198.6 C191.1 198.3 197.2 206.9 200.5 211.0 C203.8 215.1 209.2 227.2 212.9 229.5 C216.6 231.8 224.7 227.2 228.4 228.0 C232.1 228.8 237.9 232.2 240.8 235.7 C243.7 239.2 248.2 250.8 250.0 254.1 C251.8 257.4 253.4 260.9 254.6 260.1 C255.8 259.3 258.1 250.4 259.3 248.1 C260.5 245.8 262.2 243.6 263.3 242.8 C264.4 242.0 266.2 241.9 267.3 242.1 C268.4 242.3 270.3 244.2 271.2 244.1 C272.1 244.0 273.0 244.9 273.9 241.5 C274.8 238.1 276.8 223.1 277.9 218.9 C279.0 214.7 280.9 211.2 281.9 210.3 C282.9 209.4 284.4 210.4 285.2 212.3 C286.0 214.2 287.0 222.8 287.8 224.2 C288.6 225.6 290.2 225.2 291.2 222.9 C292.2 220.6 294.2 208.9 295.2 207.0 C296.2 205.1 297.7 206.3 298.5 209.0 C299.3 211.7 300.5 222.5 301.1 226.9 C301.7 231.3 302.5 241.6 303.1 242.1 C303.7 242.6 305.1 233.7 305.8 230.9 C306.5 228.1 307.7 222.8 308.4 220.9 C309.1 219.0 310.3 217.3 311.1 216.9 C311.9 216.5 313.6 219.2 314.4 218.2 C315.2 217.2 316.3 210.7 317.1 209.6 C317.9 208.5 319.6 208.5 320.4 209.6 C321.2 210.7 322.3 217.2 323.0 217.6 C323.7 218.0 325.0 213.7 325.7 212.9 C326.4 212.1 327.7 211.2 328.4 211.6 C329.1 212.0 330.3 214.3 331.0 216.2 C331.7 218.1 332.8 224.8 333.7 226.2 C334.6 227.6 336.5 225.2 337.6 226.9 C338.7 228.6 340.6 238.1 341.6 238.8 C342.6 239.5 344.1 233.8 345.0 232.2 C345.9 230.6 347.1 227.1 348.3 226.9 C349.5 226.7 352.4 229.0 354.0 230.9 C355.6 232.8 358.8 240.0 360.0 241.5 C361.2 243.0 362.3 241.6 363.3 242.1 C364.3 242.6 366.2 246.5 367.3 245.5 C368.4 244.5 370.3 237.7 371.2 234.8 C372.1 231.9 373.2 227.8 373.9 223.6 C374.6 219.4 375.8 205.7 376.6 203.0 C377.4 200.3 379.1 202.1 379.9 203.0 C380.7 203.9 381.7 207.2 382.5 209.6 C383.3 212.0 384.9 217.2 385.9 220.9 C386.9 224.6 388.7 235.5 389.8 237.5 C390.9 239.5 392.7 237.5 393.8 236.2 C394.9 234.9 396.6 230.6 397.8 227.5 C399.0 224.4 401.4 213.9 402.5 212.9 C403.6 211.9 405.4 216.2 406.4 220.2 C407.4 224.2 408.8 239.3 409.8 242.8 C410.8 246.3 412.8 248.0 413.7 246.1 C414.6 244.2 415.5 231.2 416.4 228.2 C417.3 225.2 419.4 223.1 420.4 223.6 C421.4 224.1 422.7 229.3 423.7 232.2 C424.7 235.1 426.7 242.3 427.7 245.5 C428.7 248.7 430.3 253.6 431.0 256.1 C431.7 258.6 432.3 264.8 433.0 264.1 C433.7 263.4 435.5 254.5 436.3 250.8 C437.1 247.1 438.1 238.5 439.0 236.2 C439.9 233.9 442.1 236.2 443.0 233.5 C443.9 230.8 444.8 219.5 445.6 216.2 C446.4 212.9 448.1 210.1 448.9 209.0 C449.7 207.9 450.9 206.8 451.5 207.7 C452.1 208.6 452.8 213.6 453.3 215.4 C453.8 217.2 454.9 221.5 455.6 221.3 C456.3 221.1 457.7 215.0 458.6 214.2 C459.5 213.4 461.2 214.3 462.1 215.4 C463.0 216.5 464.9 222.0 465.6 222.4 C466.3 222.8 466.7 219.0 467.4 218.3 C468.1 217.6 470.1 218.8 470.9 217.1 C471.7 215.4 472.6 207.3 473.3 205.3 C474.0 203.3 475.6 203.1 476.3 201.8 C477.0 200.5 477.9 195.6 478.6 195.3 C479.3 195.0 480.9 197.6 481.6 199.4 C482.3 201.2 483.4 206.3 483.9 208.9 C484.4 211.5 485.0 216.9 485.7 218.9 C486.4 220.9 488.4 221.9 489.2 223.6 C490.0 225.3 491.1 231.1 491.6 231.3 C492.1 231.5 492.3 225.3 492.8 224.8 C493.3 224.3 494.9 226.8 495.7 227.7 C496.5 228.6 498.1 230.3 498.7 231.9 C499.3 233.5 499.9 240.4 500.4 239.5 C500.9 238.6 502.3 227.8 502.8 225.4 C503.3 223.0 503.4 221.5 504.0 221.3 C504.6 221.1 506.7 222.7 507.5 223.6 C508.3 224.5 509.3 228.9 509.9 227.7 C510.5 226.5 511.4 217.0 512.2 214.8 C513.0 212.6 514.7 211.7 515.8 211.2 C516.9 210.7 519.5 211.6 520.5 211.2 C521.5 210.8 522.6 208.1 523.4 208.3 C524.2 208.5 525.5 211.1 526.4 212.4 C527.3 213.7 528.9 216.0 529.9 217.7 C530.9 219.4 533.1 224.6 534.0 224.8 C534.9 225.0 535.6 219.7 536.4 219.5 C537.2 219.3 539.1 221.9 540.0 223.2 C540.9 224.5 542.4 226.6 543.2 228.9 C544.0 231.2 544.9 239.0 545.7 240.3 C546.5 241.6 547.5 241.3 548.9 238.6 C550.3 235.9 554.8 221.6 556.2 220.0 C557.6 218.4 558.3 226.3 559.5 226.5 C560.7 226.7 563.9 221.8 565.1 221.6 C566.3 221.4 567.1 225.7 568.4 224.9 C569.7 224.1 573.5 216.6 574.9 215.9 C576.3 215.2 577.9 220.1 578.9 220.0 C579.9 219.9 581.1 215.5 582.2 215.1 C583.3 214.7 586.0 215.2 587.0 216.8 C588.0 218.4 588.8 226.9 589.5 227.3 C590.2 227.7 590.6 220.0 591.9 220.0 C593.2 220.0 597.5 227.6 599.2 227.3 C600.9 227.0 603.1 219.5 604.9 217.6 C606.7 215.7 610.9 213.8 613.0 212.7 C615.1 211.6 618.7 209.7 620.3 209.5 C621.9 209.3 623.7 206.6 625.1 211.1 C626.5 215.6 629.2 242.5 630.8 243.5 C632.4 244.5 635.9 222.4 637.3 218.4 C638.7 214.4 640.2 213.2 641.3 213.5 C642.4 213.8 644.1 216.3 645.4 220.8 C646.7 225.3 649.8 245.8 651.1 247.6 C652.4 249.4 653.9 237.2 655.1 234.6 C656.3 232.0 658.6 229.9 660.0 228.1 C661.4 226.3 664.4 221.7 665.6 221.4 C666.8 221.1 667.9 224.1 668.7 226.2 C669.5 228.3 671.1 236.4 671.8 237.4 C672.5 238.4 673.6 235.8 674.3 233.6 C675.0 231.4 676.6 222.3 677.4 220.6 C678.2 218.9 679.6 219.8 680.5 220.6 C681.4 221.4 682.9 225.8 684.3 226.8 C685.7 227.8 689.6 228.1 691.1 228.0 C692.6 227.9 694.3 227.6 695.5 226.2 C696.7 224.8 698.8 218.2 699.9 217.4 C701.0 216.6 702.5 218.2 703.6 219.9 C704.7 221.6 706.7 229.0 708.0 229.9 C709.3 230.8 712.0 226.5 713.6 226.8 C715.2 227.1 718.4 232.2 719.8 232.4 C721.2 232.6 723.2 227.9 724.2 228.0 C725.2 228.1 726.5 230.7 727.3 233.0 C728.1 235.3 729.2 244.3 730.4 244.9 C731.6 245.5 734.8 238.7 736.0 237.4 C737.2 236.1 738.5 235.9 739.7 235.5 C740.9 235.1 743.8 235.2 745.3 234.3 C746.8 233.4 749.7 229.0 751.0 228.7 C752.3 228.4 753.7 231.9 754.7 232.4 C755.7 232.9 757.2 232.1 758.4 232.4 C759.6 232.7 761.9 234.4 763.4 234.3 C764.9 234.2 768.7 232.3 769.6 231.8 C770.5 231.3 769.3 231.4 770.0 230.5 C770.7 229.6 773.7 225.6 775.2 225.3 C776.7 225.0 779.3 226.3 781.1 228.3 C782.9 230.3 786.8 238.6 788.4 240.1 C790.0 241.6 791.5 240.9 792.9 239.8 C794.3 238.7 797.1 233.3 798.8 232.0 C800.5 230.7 804.0 229.9 805.4 229.8 C806.8 229.7 807.9 231.3 809.1 231.2 C810.3 231.1 813.2 228.9 814.2 229.0 C815.2 229.1 815.8 232.2 816.5 232.0 C817.2 231.8 818.1 228.6 819.4 227.6 C820.7 226.6 823.6 225.1 826.0 224.6 C828.4 224.1 835.3 223.5 837.1 223.9 C838.9 224.3 838.0 226.8 839.3 227.6 C840.6 228.4 844.3 230.0 846.7 229.8 C849.1 229.6 854.8 226.3 857.0 226.1 C859.2 225.9 861.0 228.1 862.9 228.3 C864.8 228.5 869.2 227.0 871.0 227.6 C872.8 228.2 874.7 230.6 876.2 232.7 C877.7 234.8 880.7 239.7 882.1 243.0 C883.5 246.3 885.2 255.5 886.5 257.1 C887.8 258.7 890.6 255.1 891.7 254.8 C892.8 254.5 893.5 250.9 894.6 254.8 C895.7 258.7 898.6 279.6 899.8 284.3 C901.0 289.0 903.0 289.4 903.5 290.2" fill="none" stroke="#FF0000" stroke-width="1.1" stroke-linejoin="round"/><path d="M60.3 215.1 C61.0 214.8 64.3 213.1 65.7 212.6 C67.1 212.1 69.2 211.3 70.5 211.3 C71.8 211.3 74.0 211.4 75.3 212.3 C76.6 213.2 78.7 215.8 80.0 218.0 C81.3 220.2 83.5 224.9 84.8 228.5 C86.1 232.1 88.3 240.1 89.6 244.8 C90.9 249.5 93.1 258.9 94.4 264.0 C95.7 269.1 97.9 278.3 99.2 283.2 C100.5 288.1 102.8 297.4 104.0 300.4 C105.2 303.4 106.9 306.1 108.2 305.6 C109.5 305.1 112.2 299.8 113.6 296.6 C115.0 293.4 117.1 286.7 118.4 281.3 C119.7 275.9 121.8 262.7 123.2 256.3 C124.6 249.9 127.4 238.2 128.9 233.3 C130.4 228.4 133.4 222.0 134.7 219.9 C136.0 217.8 137.4 217.6 138.5 217.6 C139.6 217.6 142.0 218.3 143.3 219.9 C144.6 221.5 146.7 225.9 148.1 229.5 C149.5 233.1 152.4 242.7 153.8 246.8 C155.2 250.9 157.3 257.3 158.6 260.2 C159.9 263.1 162.2 267.5 163.4 268.4 C164.6 269.3 166.0 269.0 167.3 266.9 C168.6 264.8 171.6 257.5 173.0 252.5 C174.4 247.5 175.2 236.6 178.0 229.5 C180.8 222.4 190.5 200.4 194.3 199.2 C198.1 198.0 204.2 215.1 206.7 220.2 C209.2 225.3 210.8 236.7 212.9 237.3 C215.0 237.9 218.5 225.1 222.2 224.9 C225.9 224.7 237.1 230.7 240.8 235.7 C244.5 240.7 248.4 257.7 250.0 262.1 C251.6 266.5 252.0 269.0 252.7 268.7 C253.4 268.4 254.3 263.3 255.3 260.1 C256.3 256.9 259.0 246.9 260.0 244.8 C261.0 242.7 261.6 243.4 262.6 244.1 C263.6 244.8 265.9 248.8 267.3 250.1 C268.7 251.4 271.7 253.3 273.2 254.1 C274.7 254.9 277.1 258.0 278.6 256.1 C280.1 254.2 283.0 244.3 284.5 240.2 C286.0 236.1 288.7 228.9 289.8 225.5 C290.9 222.1 291.7 217.4 292.5 214.9 C293.3 212.4 294.9 207.7 295.8 207.0 C296.7 206.3 298.0 206.8 299.1 209.6 C300.2 212.4 303.2 227.1 304.4 228.2 C305.6 229.3 307.4 220.3 308.4 218.2 C309.4 216.1 310.9 212.7 311.8 212.3 C312.7 211.9 314.1 213.5 315.1 214.9 C316.1 216.3 318.1 222.1 319.1 222.9 C320.1 223.7 321.3 222.4 322.4 220.9 C323.5 219.4 326.0 212.7 327.0 211.6 C328.0 210.5 328.8 211.0 329.7 212.9 C330.6 214.8 332.6 225.0 333.7 226.2 C334.8 227.4 336.8 221.6 338.3 222.2 C339.8 222.8 343.6 230.4 345.0 230.9 C346.4 231.4 347.8 224.3 348.9 226.2 C350.0 228.1 352.4 238.7 353.3 245.5 C354.2 252.3 355.3 274.1 356.0 277.3 C356.7 280.5 358.1 272.4 358.6 269.4 C359.1 266.4 359.5 258.3 360.0 254.8 C360.5 251.3 361.9 244.7 362.6 242.8 C363.3 240.9 364.5 240.5 365.3 240.2 C366.1 239.9 367.6 242.9 368.6 240.8 C369.6 238.7 371.7 228.1 372.6 224.2 C373.5 220.3 374.5 213.3 375.2 211.6 C375.9 209.9 377.0 209.2 377.9 211.6 C378.8 214.0 380.9 228.2 381.9 229.5 C382.9 230.8 384.4 222.1 385.2 221.6 C386.0 221.1 387.2 223.6 387.8 225.5 C388.4 227.4 389.0 234.8 389.8 236.2 C390.6 237.6 392.6 237.7 393.8 236.2 C395.0 234.7 397.4 228.0 398.5 224.9 C399.6 221.8 400.8 213.8 401.8 212.9 C402.8 212.0 404.7 214.3 405.8 218.2 C406.9 222.1 408.4 237.9 409.8 242.1 C411.2 246.3 415.1 250.4 416.4 249.4 C417.7 248.4 418.9 236.9 419.7 234.8 C420.5 232.7 421.5 233.7 422.4 233.5 C423.3 233.3 425.6 232.0 426.4 233.5 C427.2 235.0 427.9 243.1 428.4 244.8 C428.9 246.5 429.8 244.2 430.3 246.1 C430.8 248.0 431.8 253.9 432.3 258.7 C432.8 263.5 433.2 281.3 433.7 282.0 C434.2 282.7 435.6 269.5 436.3 264.1 C437.0 258.7 438.2 245.0 439.0 241.5 C439.8 238.0 441.5 239.6 442.3 237.5 C443.1 235.4 444.1 229.1 445.0 225.5 C445.9 221.9 448.2 212.3 448.9 210.3 C449.6 208.3 449.7 209.4 450.3 210.6 C450.9 211.8 452.8 216.6 453.3 219.5 C453.8 222.4 454.0 231.4 454.4 232.5 C454.8 233.6 455.7 228.9 456.2 227.7 C456.7 226.5 457.3 224.1 458.0 223.6 C458.7 223.1 460.7 222.8 461.5 223.6 C462.3 224.4 463.3 228.5 463.9 229.5 C464.5 230.5 465.5 231.8 466.2 231.3 C466.9 230.8 468.4 226.9 469.2 225.4 C470.0 223.9 471.4 222.2 472.1 220.1 C472.8 218.0 473.8 212.3 474.5 209.5 C475.2 206.7 476.8 200.9 477.4 199.4 C478.0 197.9 478.6 197.9 479.2 198.3 C479.8 198.7 481.4 200.6 482.1 202.4 C482.8 204.2 484.0 209.2 484.5 211.8 C485.0 214.4 485.2 220.1 485.7 221.8 C486.2 223.5 487.7 224.0 488.6 224.2 C489.5 224.4 491.4 223.0 492.2 223.6 C493.0 224.2 493.8 228.0 494.5 228.9 C495.2 229.8 496.7 229.1 497.5 230.7 C498.3 232.3 499.6 240.8 500.4 240.7 C501.2 240.6 502.8 231.8 503.4 230.1 C504.0 228.4 504.4 228.5 505.1 228.3 C505.8 228.1 507.8 229.7 508.7 228.3 C509.6 226.9 511.3 219.6 512.2 217.7 C513.1 215.8 515.2 214.2 515.8 214.2 C516.4 214.2 516.3 217.8 516.9 217.7 C517.5 217.6 519.6 214.7 520.5 213.6 C521.4 212.5 522.6 209.3 523.4 209.5 C524.2 209.7 525.7 213.4 526.4 215.4 C527.1 217.4 527.8 221.1 528.7 224.2 C529.6 227.3 532.4 236.4 533.4 238.3 C534.4 240.2 535.6 239.9 536.0 238.3 C536.4 236.7 536.1 227.0 536.6 226.0 C537.1 225.0 539.1 226.0 540.0 230.5 C540.9 235.0 541.9 258.9 543.2 259.7 C544.5 260.5 548.1 240.3 549.7 236.2 C551.3 232.1 554.0 228.6 555.4 228.9 C556.8 229.2 559.1 235.3 560.3 238.6 C561.5 241.9 563.0 254.2 564.3 254.0 C565.6 253.8 568.3 236.7 570.0 237.0 C571.7 237.3 575.4 255.2 577.3 256.5 C579.2 257.8 582.7 244.7 584.6 246.8 C586.5 248.9 590.3 272.3 591.9 271.9 C593.5 271.5 594.9 246.1 596.8 243.5 C598.7 240.9 604.6 250.0 606.5 252.4 C608.4 254.8 609.8 257.0 611.3 261.3 C612.8 265.6 616.1 284.8 617.8 284.9 C619.5 285.0 622.9 264.9 624.3 262.2 C625.7 259.5 627.3 262.3 628.4 264.6 C629.5 266.9 630.8 276.5 632.4 279.2 C634.0 281.9 638.9 283.7 640.5 284.9 C642.1 286.1 643.1 286.1 644.2 288.0 C645.3 289.9 647.5 295.6 648.4 299.2 C649.3 302.8 650.6 311.1 651.2 314.7 C651.8 318.3 651.9 323.8 652.6 325.9 C653.3 328.0 655.7 330.3 656.8 330.1 C657.9 329.9 659.9 325.9 661.0 324.5 C662.1 323.1 663.6 318.8 664.7 319.4 C665.8 320.0 668.4 324.7 669.4 328.7 C670.4 332.7 671.3 347.8 672.2 349.7 C673.1 351.6 674.7 343.4 676.4 342.7 C678.1 342.0 683.0 343.4 684.9 344.1 C686.8 344.8 689.2 349.2 690.5 348.3 C691.8 347.4 693.6 337.8 694.7 337.1 C695.8 336.4 697.8 338.6 698.9 342.7 C700.0 346.8 701.8 366.4 703.1 367.9 C704.4 369.4 707.4 355.2 708.7 353.9 C710.0 352.6 711.2 352.9 712.9 358.1 C714.6 363.3 719.6 388.7 721.3 393.2 C723.0 397.7 724.0 392.7 725.5 391.8 C727.0 390.9 730.8 386.0 732.5 386.2 C734.2 386.4 736.6 393.0 738.1 393.2 C739.6 393.4 742.1 388.7 743.7 387.6 C745.3 386.5 748.7 385.7 750.0 385.1 C751.3 384.5 752.5 383.0 753.2 383.2 C753.9 383.4 754.8 386.1 755.6 386.7 C756.4 387.3 757.8 387.0 758.9 387.5 C760.0 388.0 762.6 389.8 763.7 390.2 C764.8 390.6 766.0 390.7 766.9 390.2 C767.8 389.7 769.0 387.8 770.1 386.7 C771.2 385.6 774.0 382.6 775.0 382.2 C776.0 381.8 776.2 383.3 777.4 383.5 C778.6 383.7 782.6 383.3 783.8 383.5 C785.0 383.7 785.6 385.1 786.2 384.8 C786.8 384.5 787.8 381.8 788.6 381.5 C789.4 381.2 790.6 383.0 791.9 382.7 C793.2 382.4 797.0 380.1 798.3 379.5 C799.6 378.9 800.3 378.6 801.5 378.3 C802.7 378.0 805.9 377.4 807.2 377.4 C808.5 377.4 810.3 378.3 811.2 378.3 C812.1 378.3 812.5 377.5 813.6 377.4 C814.7 377.3 817.8 377.7 819.2 377.4 C820.6 377.1 822.4 376.2 824.1 375.4 C825.8 374.6 829.5 372.0 832.1 371.4 C834.7 370.8 840.8 371.4 843.4 370.9 C846.0 370.4 849.0 368.3 851.4 367.4 C853.8 366.5 859.6 364.8 861.1 364.5 C862.6 364.2 861.7 365.3 862.7 365.4 C863.7 365.5 867.0 365.5 868.4 365.0 C869.8 364.5 871.9 361.9 873.2 361.3 C874.5 360.7 876.9 360.3 878.0 360.3 C879.1 360.3 879.8 361.4 881.2 361.3 C882.6 361.2 887.0 360.2 888.5 359.6 C890.0 359.0 891.3 357.4 892.5 356.9 C893.7 356.4 896.1 356.3 897.3 356.1 C898.5 355.9 900.9 355.4 901.4 355.3" fill="none" stroke="#FF8000" stroke-width="1.1" stroke-linejoin="round"/><path d="M60.3 230.5 C61.5 229.9 67.2 226.8 69.5 225.7 C71.8 224.6 75.5 222.6 77.2 222.2 C78.9 221.8 80.1 221.6 82.0 222.8 C83.9 224.0 89.3 228.7 91.5 231.4 C93.7 234.1 96.6 239.3 98.3 242.9 C100.0 246.5 102.5 253.4 104.0 258.3 C105.5 263.2 108.3 273.7 109.8 279.3 C111.3 284.9 114.0 295.9 115.5 300.4 C117.0 304.9 120.0 310.9 121.3 312.9 C122.6 314.9 123.8 316.8 125.1 315.4 C126.4 314.0 129.3 308.1 130.8 302.3 C132.3 296.5 135.1 280.1 136.6 271.7 C138.1 263.3 140.9 244.5 142.3 239.1 C143.7 233.7 145.8 231.1 147.1 231.0 C148.4 230.9 150.6 234.2 151.9 238.1 C153.2 242.0 155.3 252.9 156.7 260.2 C158.1 267.5 161.0 286.0 162.5 292.8 C164.0 299.6 166.1 308.0 168.2 311.0 C170.3 314.0 175.1 312.2 178.0 315.4 C180.9 318.6 187.0 335.3 189.7 334.8 C192.4 334.3 196.5 315.7 198.2 311.6 C199.9 307.5 201.3 305.5 202.4 304.1 C203.5 302.7 205.2 301.5 206.5 301.3 C207.8 301.1 210.7 302.5 212.4 302.5 C214.1 302.5 217.6 301.2 219.0 301.3 C220.4 301.4 222.0 301.6 223.2 303.0 C224.4 304.4 226.6 309.0 228.1 311.6 C229.6 314.2 232.8 321.5 234.8 322.4 C236.8 323.3 241.4 318.3 243.1 318.2 C244.8 318.1 246.0 318.2 247.2 321.6 C248.4 325.0 250.2 344.7 252.2 344.0 C254.2 343.3 259.6 316.6 262.4 316.2 C265.2 315.8 270.7 339.8 273.2 341.0 C275.7 342.2 278.9 320.8 281.0 325.5 C283.1 330.2 286.4 376.2 288.7 376.6 C291.0 377.0 295.3 332.3 298.0 328.6 C300.7 324.9 306.3 345.8 308.8 348.7 C311.3 351.6 314.7 346.4 316.6 350.3 C318.5 354.2 321.8 378.7 323.3 378.1 C324.8 377.5 326.2 351.1 327.5 345.7 C328.8 340.3 331.6 336.0 333.3 337.4 C335.0 338.8 338.4 355.9 339.9 356.5 C341.4 357.1 343.7 343.8 344.9 341.6 C346.1 339.4 347.9 340.7 349.1 339.9 C350.3 339.1 352.9 333.8 354.1 335.7 C355.3 337.6 357.1 354.0 358.2 354.0 C359.3 354.0 361.4 338.2 362.4 335.7 C363.4 333.2 364.5 331.9 365.7 334.9 C366.9 337.9 369.8 357.2 371.5 358.2 C373.2 359.2 376.1 343.0 378.1 342.4 C380.1 341.8 384.6 351.9 386.4 354.0 C388.2 356.1 390.1 358.7 391.4 358.2 C392.7 357.7 395.0 349.9 396.4 349.9 C397.8 349.9 400.8 358.8 402.2 358.2 C403.6 357.6 406.0 347.5 407.2 345.7 C408.4 343.9 410.3 343.2 411.4 344.9 C412.5 346.6 414.2 358.2 415.5 358.2 C416.8 358.2 419.9 346.3 421.3 344.9 C422.7 343.5 425.4 346.6 426.3 347.4 C427.2 348.2 427.3 350.8 428.0 350.7 C428.7 350.6 430.2 346.8 431.3 346.5 C432.4 346.2 435.4 347.2 436.3 348.2 C437.2 349.2 436.8 355.1 437.9 354.0 C439.0 352.9 443.3 340.9 444.6 339.9 C445.9 338.9 447.0 345.8 447.9 346.5 C448.8 347.2 450.3 346.7 451.2 344.9 C452.1 343.1 453.6 334.5 454.5 333.3 C455.4 332.1 457.1 334.0 457.9 335.7 C458.7 337.4 459.7 344.1 460.4 345.7 C461.1 347.3 461.6 345.0 462.9 347.4 C464.2 349.8 468.5 365.3 470.3 364.0 C472.1 362.7 474.8 341.4 476.1 337.4 C477.4 333.4 478.8 333.6 480.0 334.1 C481.2 334.6 483.3 340.5 485.2 341.0 C487.1 341.5 491.6 342.2 494.5 337.9 C497.4 333.6 504.8 311.4 506.9 308.5 C509.0 305.6 508.8 319.9 510.0 316.2 C511.2 312.5 514.7 284.3 516.2 280.6 C517.7 276.9 519.5 288.8 520.9 288.4 C522.3 288.0 525.8 276.9 527.0 277.5 C528.2 278.1 528.9 293.4 530.1 293.0 C531.3 292.6 535.0 276.1 536.3 274.4 C537.6 272.7 539.0 277.1 540.0 280.0 C541.0 282.9 542.9 296.4 544.1 296.2 C545.3 296.0 547.8 281.5 548.9 278.4 C550.0 275.3 551.5 276.9 552.2 272.7 C552.9 268.5 553.1 251.2 553.8 246.8 C554.5 242.4 556.8 239.4 557.8 239.5 C558.8 239.6 560.2 247.7 561.1 247.6 C562.0 247.5 563.4 240.8 564.3 238.6 C565.2 236.4 565.7 233.1 567.6 231.3 C569.5 229.5 577.1 227.2 578.9 224.9 C580.7 222.6 580.3 215.8 581.3 214.3 C582.3 212.8 584.9 211.0 586.2 213.5 C587.5 216.0 590.1 232.0 591.1 233.0 C592.1 234.0 592.4 221.8 593.5 220.8 C594.6 219.8 597.9 226.6 599.2 225.7 C600.5 224.8 601.8 216.9 603.2 214.3 C604.6 211.7 607.8 205.7 609.7 206.2 C611.6 206.7 616.3 217.3 617.8 218.4 C619.3 219.5 620.0 213.8 621.1 214.3 C622.2 214.8 624.6 217.3 625.9 222.4 C627.2 227.5 629.3 252.4 630.8 252.4 C632.3 252.4 635.7 226.6 637.3 222.4 C638.9 218.2 641.2 216.9 643.0 220.8 C644.8 224.7 648.8 250.1 651.1 251.6 C653.4 253.1 658.4 235.0 660.0 232.2 C661.6 229.4 662.4 231.6 663.1 230.5 C663.8 229.4 664.9 224.7 665.6 224.3 C666.3 223.9 668.0 225.2 668.7 227.4 C669.4 229.6 670.5 238.8 671.2 240.5 C671.9 242.2 672.8 242.8 673.7 240.5 C674.6 238.2 676.7 224.5 678.1 223.1 C679.5 221.7 683.1 229.0 684.3 229.9 C685.5 230.8 686.5 229.5 687.4 229.9 C688.3 230.3 689.9 232.9 691.1 232.6 C692.3 232.3 694.8 229.2 696.1 227.4 C697.4 225.6 699.4 220.0 700.5 219.3 C701.6 218.6 703.3 220.8 704.2 222.4 C705.1 224.0 706.5 229.7 707.3 231.2 C708.1 232.7 709.6 233.8 710.5 233.6 C711.4 233.4 713.4 230.3 714.2 229.9 C715.0 229.5 716.0 229.6 716.7 230.5 C717.4 231.4 718.8 237.1 719.8 236.8 C720.8 236.5 723.2 228.3 724.2 228.0 C725.2 227.7 726.5 232.1 727.3 234.9 C728.1 237.7 729.6 247.6 730.4 249.2 C731.2 250.8 732.6 248.2 733.5 246.7 C734.4 245.2 736.2 239.5 737.2 238.0 C738.2 236.5 739.8 235.8 741.0 235.5 C742.2 235.2 744.7 236.2 746.0 235.5 C747.3 234.8 749.8 230.2 751.0 229.9 C752.2 229.6 753.2 232.8 754.7 233.6 C756.2 234.4 760.4 236.2 762.2 236.1 C764.0 236.0 767.4 233.6 768.4 233.0 C769.4 232.4 769.1 232.6 770.0 231.7 C770.9 230.8 773.7 226.8 775.2 226.5 C776.7 226.2 779.3 227.5 781.1 229.5 C782.9 231.5 786.8 239.8 788.4 241.3 C790.0 242.8 791.5 242.1 792.9 241.0 C794.3 239.9 797.1 234.5 798.8 233.2 C800.5 231.9 804.0 231.1 805.4 231.0 C806.8 230.9 807.9 232.5 809.1 232.4 C810.3 232.3 813.2 230.1 814.2 230.2 C815.2 230.3 815.8 233.4 816.5 233.2 C817.2 233.0 818.1 229.8 819.4 228.8 C820.7 227.8 823.6 226.3 826.0 225.8 C828.4 225.3 835.3 224.7 837.1 225.1 C838.9 225.5 838.0 228.0 839.3 228.8 C840.6 229.6 844.3 231.2 846.7 231.0 C849.1 230.8 854.8 227.5 857.0 227.3 C859.2 227.1 861.0 229.3 862.9 229.5 C864.8 229.7 869.2 228.2 871.0 228.8 C872.8 229.4 874.7 231.8 876.2 233.9 C877.7 236.0 880.7 240.9 882.1 244.2 C883.5 247.5 885.2 256.7 886.5 258.3 C887.8 259.9 890.6 256.3 891.7 256.0 C892.8 255.7 893.5 252.1 894.6 256.0 C895.7 259.9 898.6 280.8 899.8 285.5 C901.0 290.2 903.0 290.6 903.5 291.4" fill="none" stroke="#FFFF00" stroke-width="1.1" stroke-linejoin="round"/></g><defs><clipPath id="gc"><rect x="60" y="130" width="844" height="458"/></clipPath></defs></svg><div style="position:absolute;right:907px;top:124px;font-size:11px;line-height:1;color:#FFFFC0;white-space:pre;transform:scaleY(1.2);transform-origin:0 0">100.0</div><div style="position:absolute;right:907px;top:215px;font-size:11px;line-height:1;color:#FFFFC0;white-space:pre;transform:scaleY(1.2);transform-origin:0 0">80.0</div><div style="position:absolute;right:907px;top:306px;font-size:11px;line-height:1;color:#FFFFC0;white-space:pre;transform:scaleY(1.2);transform-origin:0 0">60.0</div><div style="position:absolute;right:907px;top:398px;font-size:11px;line-height:1;color:#FFFFC0;white-space:pre;transform:scaleY(1.2);transform-origin:0 0">40.0</div><div style="position:absolute;right:907px;top:489px;font-size:11px;line-height:1;color:#FFFFC0;white-space:pre;transform:scaleY(1.2);transform-origin:0 0">20.0</div><div style="position:absolute;right:907px;top:581px;font-size:11px;line-height:1;color:#FFFFC0;white-space:pre;transform:scaleY(1.2);transform-origin:0 0">0.0</div><div style="position:absolute;right:907px;top:170px;font-size:11px;line-height:1;color:#FFFFC0;white-space:pre;transform:scaleY(1.2);transform-origin:0 0">dBSPL</div><div style="position:absolute;left:908px;top:124px;font-size:11px;line-height:1;color:#fff;white-space:pre;transform:scaleY(1.2);transform-origin:0 0">180.0</div><div style="position:absolute;left:908px;top:170px;font-size:11px;line-height:1;color:#fff;white-space:pre;transform:scaleY(1.2);transform-origin:0 0">Deg</div><div style="position:absolute;left:908px;top:215px;font-size:11px;line-height:1;color:#fff;white-space:pre;transform:scaleY(1.2);transform-origin:0 0">108.0</div><div style="position:absolute;left:908px;top:306px;font-size:11px;line-height:1;color:#fff;white-space:pre;transform:scaleY(1.2);transform-origin:0 0">36.0</div><div style="position:absolute;left:908px;top:398px;font-size:11px;line-height:1;color:#fff;white-space:pre;transform:scaleY(1.2);transform-origin:0 0">-36.0</div><div style="position:absolute;left:908px;top:489px;font-size:11px;line-height:1;color:#fff;white-space:pre;transform:scaleY(1.2);transform-origin:0 0">-108.0</div><div style="position:absolute;left:908px;top:581px;font-size:11px;line-height:1;color:#fff;white-space:pre;transform:scaleY(1.2);transform-origin:0 0">-180.0</div><div style="position:absolute;left:30.0px;width:60px;text-align:center;top:595px;font-size:11px;line-height:1;color:#fff;white-space:pre;transform:scaleY(1.2);transform-origin:0 0">20</div><div style="position:absolute;left:140.2px;width:60px;text-align:center;top:595px;font-size:11px;line-height:1;color:#fff;white-space:pre;transform:scaleY(1.2);transform-origin:0 0">50</div><div style="position:absolute;left:223.5px;width:60px;text-align:center;top:595px;font-size:11px;line-height:1;color:#fff;white-space:pre;transform:scaleY(1.2);transform-origin:0 0">100</div><div style="position:absolute;left:306.9px;width:60px;text-align:center;top:595px;font-size:11px;line-height:1;color:#fff;white-space:pre;transform:scaleY(1.2);transform-origin:0 0">200</div><div style="position:absolute;left:417.1px;width:60px;text-align:center;top:595px;font-size:11px;line-height:1;color:#fff;white-space:pre;transform:scaleY(1.2);transform-origin:0 0">500</div><div style="position:absolute;left:500.4px;width:60px;text-align:center;top:595px;font-size:11px;line-height:1;color:#fff;white-space:pre;transform:scaleY(1.2);transform-origin:0 0">1k</div><div style="position:absolute;left:583.8px;width:60px;text-align:center;top:595px;font-size:11px;line-height:1;color:#fff;white-space:pre;transform:scaleY(1.2);transform-origin:0 0">2k</div><div style="position:absolute;left:639.7px;width:60px;text-align:center;top:595px;font-size:11px;line-height:1;color:#fff;white-space:pre;transform:scaleY(1.2);transform-origin:0 0">Hz</div><div style="position:absolute;left:694.0px;width:60px;text-align:center;top:595px;font-size:11px;line-height:1;color:#fff;white-space:pre;transform:scaleY(1.2);transform-origin:0 0">5k</div><div style="position:absolute;left:777.4px;width:60px;text-align:center;top:595px;font-size:11px;line-height:1;color:#fff;white-space:pre;transform:scaleY(1.2);transform-origin:0 0">10k</div><div style="position:absolute;left:860.7px;width:60px;text-align:center;top:595px;font-size:11px;line-height:1;color:#fff;white-space:pre;transform:scaleY(1.2);transform-origin:0 0">20k</div><svg style="position:absolute;left:67px;top:112px;shape-rendering:auto" width="10" height="5" viewBox="0 0 10 5" shape-rendering="crispEdges"><path d="M0 5 L5.0 0 L10 5 Z" fill="#fff"/></svg><svg style="position:absolute;left:91px;top:112px;shape-rendering:auto" width="10" height="5" viewBox="0 0 10 5" shape-rendering="crispEdges"><path d="M0 0 L5.0 5 L10 0 Z" fill="#fff"/></svg><svg style="position:absolute;left:115px;top:109px;shape-rendering:auto" width="10" height="5" viewBox="0 0 10 5" shape-rendering="crispEdges"><path d="M0 5 L5.0 0 L10 5 Z" fill="#fff"/></svg><svg style="position:absolute;left:115px;top:116px;shape-rendering:auto" width="10" height="5" viewBox="0 0 10 5" shape-rendering="crispEdges"><path d="M0 0 L5.0 5 L10 0 Z" fill="#fff"/></svg><svg style="position:absolute;left:139px;top:109px;shape-rendering:auto" width="10" height="5" viewBox="0 0 10 5" shape-rendering="crispEdges"><path d="M0 0 L5.0 5 L10 0 Z" fill="#fff"/></svg><svg style="position:absolute;left:139px;top:116px;shape-rendering:auto" width="10" height="5" viewBox="0 0 10 5" shape-rendering="crispEdges"><path d="M0 5 L5.0 0 L10 5 Z" fill="#fff"/></svg><div style="position:absolute;left:180px;top:104px;width:22px;height:20px;border:1px solid #fff;border-right-color:#808080;border-bottom-color:#808080"></div><svg style="position:absolute;left:183px;top:106px;shape-rendering:auto" width="19" height="19" viewBox="0 0 19 19" shape-rendering="crispEdges"><circle cx="6.5" cy="6.5" r="5.2" fill="#000" stroke="#C0C0C0" stroke-width="1.6"/><circle cx="6.5" cy="6.5" r="5.2" fill="none" stroke="#fff" stroke-width="1.6" stroke-dasharray="1.2 1.2"/><path d="M6.5 3.5 V9.5 M3.5 6.5 H9.5" stroke="#f00" stroke-width="1.6"/><path d="M10.5 10.5 L17 17" stroke="#fff" stroke-width="2"/><path d="M10 10 L12 12" stroke="#ff0" stroke-width="2"/></svg><svg style="position:absolute;left:208px;top:106px;shape-rendering:auto" width="18" height="19" viewBox="0 0 18 19" shape-rendering="crispEdges"><circle cx="6" cy="6" r="4.6" fill="none" stroke="#fff" stroke-width="1.3"/><path d="M9.5 9.5 L16 16" stroke="#fff" stroke-width="1"/></svg><div style="position:absolute;left:252px;top:108px;width:16px;height:16px;background:#FFFFC0;"></div><div style="position:absolute;left:252px;top:109px;width:13px;height:13px;background:#fff;"></div><div style="position:absolute;left:252px;top:109px;width:12px;height:1px;background:#808080;"></div><div style="position:absolute;left:252px;top:109px;width:1px;height:12px;background:#808080;"></div><div style="position:absolute;left:253px;top:110px;width:10px;height:1px;background:#404040;"></div><div style="position:absolute;left:253px;top:110px;width:1px;height:10px;background:#404040;"></div><div style="position:absolute;left:253px;top:120px;width:11px;height:1px;background:#D4D0C8;"></div><div style="position:absolute;left:263px;top:110px;width:1px;height:11px;background:#D4D0C8;"></div><svg style="position:absolute;left:255px;top:112px;shape-rendering:auto" width="8" height="8" viewBox="0 0 8 8" shape-rendering="crispEdges"><path d="M0.5 3.5 L3 6.2 L7.5 1" stroke="#000" stroke-width="2" fill="none"/></svg><div style="position:absolute;left:289px;top:108px;width:13px;height:13px;border:1px solid #fff;"></div><svg style="position:absolute;left:289px;top:108px;shape-rendering:auto" width="15" height="15" viewBox="0 0 15 15" shape-rendering="crispEdges"><text x="7.5" y="12.3" text-anchor="middle" font-size="14" fill="#fff" stroke="#fff" stroke-width="0.5">1</text></svg><div style="position:absolute;left:310px;top:108px;width:16px;height:16px;background:#FF0000;"></div><div style="position:absolute;left:310px;top:109px;width:13px;height:13px;background:#fff;"></div><div style="position:absolute;left:310px;top:109px;width:12px;height:1px;background:#808080;"></div><div style="position:absolute;left:310px;top:109px;width:1px;height:12px;background:#808080;"></div><div style="position:absolute;left:311px;top:110px;width:10px;height:1px;background:#404040;"></div><div style="position:absolute;left:311px;top:110px;width:1px;height:10px;background:#404040;"></div><div style="position:absolute;left:311px;top:120px;width:11px;height:1px;background:#D4D0C8;"></div><div style="position:absolute;left:321px;top:110px;width:1px;height:11px;background:#D4D0C8;"></div><svg style="position:absolute;left:313px;top:112px;shape-rendering:auto" width="8" height="8" viewBox="0 0 8 8" shape-rendering="crispEdges"><path d="M0.5 3.5 L3 6.2 L7.5 1" stroke="#000" stroke-width="2" fill="none"/></svg><div style="position:absolute;left:335px;top:108px;width:13px;height:13px;border:1px solid #fff;"></div><svg style="position:absolute;left:335px;top:108px;shape-rendering:auto" width="15" height="15" viewBox="0 0 15 15" shape-rendering="crispEdges"><text x="7.5" y="12.3" text-anchor="middle" font-size="14" fill="#fff" stroke="#fff" stroke-width="0.5">2</text></svg><div style="position:absolute;left:356px;top:108px;width:16px;height:16px;background:#FFFFFF;"></div><div style="position:absolute;left:356px;top:109px;width:13px;height:13px;background:#fff;"></div><div style="position:absolute;left:356px;top:109px;width:12px;height:1px;background:#808080;"></div><div style="position:absolute;left:356px;top:109px;width:1px;height:12px;background:#808080;"></div><div style="position:absolute;left:357px;top:110px;width:10px;height:1px;background:#404040;"></div><div style="position:absolute;left:357px;top:110px;width:1px;height:10px;background:#404040;"></div><div style="position:absolute;left:357px;top:120px;width:11px;height:1px;background:#D4D0C8;"></div><div style="position:absolute;left:367px;top:110px;width:1px;height:11px;background:#D4D0C8;"></div><div style="position:absolute;left:376px;top:104px;width:22px;height:20px;border:1px solid #fff;border-right-color:#808080;border-bottom-color:#808080"></div><div style="position:absolute;left:381px;top:108px;width:13px;height:13px;border:1px solid #fff;"></div><svg style="position:absolute;left:381px;top:108px;shape-rendering:auto" width="15" height="15" viewBox="0 0 15 15" shape-rendering="crispEdges"><text x="7.5" y="12.3" text-anchor="middle" font-size="14" fill="#fff" stroke="#fff" stroke-width="0.5">3</text></svg><div style="position:absolute;left:402px;top:108px;width:16px;height:16px;background:#00FF00;"></div><div style="position:absolute;left:402px;top:109px;width:13px;height:13px;background:#fff;"></div><div style="position:absolute;left:402px;top:109px;width:12px;height:1px;background:#808080;"></div><div style="position:absolute;left:402px;top:109px;width:1px;height:12px;background:#808080;"></div><div style="position:absolute;left:403px;top:110px;width:10px;height:1px;background:#404040;"></div><div style="position:absolute;left:403px;top:110px;width:1px;height:10px;background:#404040;"></div><div style="position:absolute;left:403px;top:120px;width:11px;height:1px;background:#D4D0C8;"></div><div style="position:absolute;left:413px;top:110px;width:1px;height:11px;background:#D4D0C8;"></div><div style="position:absolute;left:427px;top:108px;width:13px;height:13px;border:1px solid #fff;"></div><svg style="position:absolute;left:427px;top:108px;shape-rendering:auto" width="15" height="15" viewBox="0 0 15 15" shape-rendering="crispEdges"><text x="7.5" y="12.3" text-anchor="middle" font-size="14" fill="#fff" stroke="#fff" stroke-width="0.5">4</text></svg><div style="position:absolute;left:448px;top:108px;width:16px;height:16px;background:#FFFF00;"></div><div style="position:absolute;left:448px;top:109px;width:13px;height:13px;background:#fff;"></div><div style="position:absolute;left:448px;top:109px;width:12px;height:1px;background:#808080;"></div><div style="position:absolute;left:448px;top:109px;width:1px;height:12px;background:#808080;"></div><div style="position:absolute;left:449px;top:110px;width:10px;height:1px;background:#404040;"></div><div style="position:absolute;left:449px;top:110px;width:1px;height:10px;background:#404040;"></div><div style="position:absolute;left:449px;top:120px;width:11px;height:1px;background:#D4D0C8;"></div><div style="position:absolute;left:459px;top:110px;width:1px;height:11px;background:#D4D0C8;"></div><svg style="position:absolute;left:451px;top:112px;shape-rendering:auto" width="8" height="8" viewBox="0 0 8 8" shape-rendering="crispEdges"><path d="M0.5 3.5 L3 6.2 L7.5 1" stroke="#000" stroke-width="2" fill="none"/></svg><div style="position:absolute;left:473px;top:108px;width:13px;height:13px;border:1px solid #fff;"></div><svg style="position:absolute;left:473px;top:108px;shape-rendering:auto" width="15" height="15" viewBox="0 0 15 15" shape-rendering="crispEdges"><text x="7.5" y="12.3" text-anchor="middle" font-size="14" fill="#fff" stroke="#fff" stroke-width="0.5">5</text></svg><div style="position:absolute;left:494px;top:108px;width:16px;height:16px;background:#FF8000;"></div><div style="position:absolute;left:494px;top:109px;width:13px;height:13px;background:#fff;"></div><div style="position:absolute;left:494px;top:109px;width:12px;height:1px;background:#808080;"></div><div style="position:absolute;left:494px;top:109px;width:1px;height:12px;background:#808080;"></div><div style="position:absolute;left:495px;top:110px;width:10px;height:1px;background:#404040;"></div><div style="position:absolute;left:495px;top:110px;width:1px;height:10px;background:#404040;"></div><div style="position:absolute;left:495px;top:120px;width:11px;height:1px;background:#D4D0C8;"></div><div style="position:absolute;left:505px;top:110px;width:1px;height:11px;background:#D4D0C8;"></div><svg style="position:absolute;left:497px;top:112px;shape-rendering:auto" width="8" height="8" viewBox="0 0 8 8" shape-rendering="crispEdges"><path d="M0.5 3.5 L3 6.2 L7.5 1" stroke="#000" stroke-width="2" fill="none"/></svg><div style="position:absolute;left:519px;top:108px;width:13px;height:13px;border:1px solid #fff;"></div><svg style="position:absolute;left:519px;top:108px;shape-rendering:auto" width="15" height="15" viewBox="0 0 15 15" shape-rendering="crispEdges"><text x="7.5" y="12.3" text-anchor="middle" font-size="14" fill="#fff" stroke="#fff" stroke-width="0.5">6</text></svg><div style="position:absolute;left:540px;top:108px;width:16px;height:16px;background:#0000FF;"></div><div style="position:absolute;left:540px;top:109px;width:13px;height:13px;background:#fff;"></div><div style="position:absolute;left:540px;top:109px;width:12px;height:1px;background:#808080;"></div><div style="position:absolute;left:540px;top:109px;width:1px;height:12px;background:#808080;"></div><div style="position:absolute;left:541px;top:110px;width:10px;height:1px;background:#404040;"></div><div style="position:absolute;left:541px;top:110px;width:1px;height:10px;background:#404040;"></div><div style="position:absolute;left:541px;top:120px;width:11px;height:1px;background:#D4D0C8;"></div><div style="position:absolute;left:551px;top:110px;width:1px;height:11px;background:#D4D0C8;"></div><div style="position:absolute;left:560px;top:104px;width:22px;height:20px;border:1px solid #fff;border-right-color:#808080;border-bottom-color:#808080"></div><div style="position:absolute;left:565px;top:108px;width:13px;height:13px;border:1px solid #fff;"></div><svg style="position:absolute;left:565px;top:108px;shape-rendering:auto" width="15" height="15" viewBox="0 0 15 15" shape-rendering="crispEdges"><text x="7.5" y="12.3" text-anchor="middle" font-size="14" fill="#fff" stroke="#fff" stroke-width="0.5">7</text></svg><div style="position:absolute;left:586px;top:108px;width:16px;height:16px;background:#FF00FF;"></div><div style="position:absolute;left:586px;top:109px;width:13px;height:13px;background:#fff;"></div><div style="position:absolute;left:586px;top:109px;width:12px;height:1px;background:#808080;"></div><div style="position:absolute;left:586px;top:109px;width:1px;height:12px;background:#808080;"></div><div style="position:absolute;left:587px;top:110px;width:10px;height:1px;background:#404040;"></div><div style="position:absolute;left:587px;top:110px;width:1px;height:10px;background:#404040;"></div><div style="position:absolute;left:587px;top:120px;width:11px;height:1px;background:#D4D0C8;"></div><div style="position:absolute;left:597px;top:110px;width:1px;height:11px;background:#D4D0C8;"></div><div style="position:absolute;left:611px;top:108px;width:13px;height:13px;border:1px solid #fff;"></div><svg style="position:absolute;left:611px;top:108px;shape-rendering:auto" width="15" height="15" viewBox="0 0 15 15" shape-rendering="crispEdges"><text x="7.5" y="12.3" text-anchor="middle" font-size="14" fill="#fff" stroke="#fff" stroke-width="0.5">8</text></svg><div style="position:absolute;left:632px;top:108px;width:16px;height:16px;background:#80FFFF;"></div><div style="position:absolute;left:632px;top:109px;width:13px;height:13px;background:#fff;"></div><div style="position:absolute;left:632px;top:109px;width:12px;height:1px;background:#808080;"></div><div style="position:absolute;left:632px;top:109px;width:1px;height:12px;background:#808080;"></div><div style="position:absolute;left:633px;top:110px;width:10px;height:1px;background:#404040;"></div><div style="position:absolute;left:633px;top:110px;width:1px;height:10px;background:#404040;"></div><div style="position:absolute;left:633px;top:120px;width:11px;height:1px;background:#D4D0C8;"></div><div style="position:absolute;left:643px;top:110px;width:1px;height:11px;background:#D4D0C8;"></div><div style="position:absolute;left:657px;top:108px;width:13px;height:13px;border:1px solid #fff;"></div><svg style="position:absolute;left:657px;top:108px;shape-rendering:auto" width="15" height="15" viewBox="0 0 15 15" shape-rendering="crispEdges"><text x="7.5" y="12.3" text-anchor="middle" font-size="14" fill="#fff" stroke="#fff" stroke-width="0.5">9</text></svg><div style="position:absolute;left:678px;top:108px;width:16px;height:16px;background:#C0C0C0;"></div><div style="position:absolute;left:678px;top:109px;width:13px;height:13px;background:#fff;"></div><div style="position:absolute;left:678px;top:109px;width:12px;height:1px;background:#808080;"></div><div style="position:absolute;left:678px;top:109px;width:1px;height:12px;background:#808080;"></div><div style="position:absolute;left:679px;top:110px;width:10px;height:1px;background:#404040;"></div><div style="position:absolute;left:679px;top:110px;width:1px;height:10px;background:#404040;"></div><div style="position:absolute;left:679px;top:120px;width:11px;height:1px;background:#D4D0C8;"></div><div style="position:absolute;left:689px;top:110px;width:1px;height:11px;background:#D4D0C8;"></div><div style="position:absolute;left:715px;top:108px;width:13px;height:13px;border:1px solid #fff;"></div><svg style="position:absolute;left:715px;top:108px;shape-rendering:auto" width="15" height="15" viewBox="0 0 15 15" shape-rendering="crispEdges"><text x="7.5" y="12.3" text-anchor="middle" font-size="14" fill="#fff" stroke="#fff" stroke-width="0.5">A</text></svg><div style="position:absolute;left:739px;top:108px;width:13px;height:13px;border:1px solid #fff;"></div><svg style="position:absolute;left:739px;top:108px;shape-rendering:auto" width="15" height="15" viewBox="0 0 15 15" shape-rendering="crispEdges"><text x="7.5" y="12.3" text-anchor="middle" font-size="14" fill="#fff" stroke="#fff" stroke-width="0.5">B</text></svg><div style="position:absolute;left:4px;top:624px;width:200px;height:1px;background:#808080;"></div><div style="position:absolute;left:4px;top:624px;width:1px;height:26px;background:#808080;"></div><div style="position:absolute;left:4px;top:649px;width:200px;height:1px;background:#FFFFFF;"></div><div style="position:absolute;left:203px;top:624px;width:1px;height:26px;background:#FFFFFF;"></div><div style="position:absolute;left:206px;top:624px;width:753px;height:1px;background:#808080;"></div><div style="position:absolute;left:206px;top:624px;width:1px;height:26px;background:#808080;"></div><div style="position:absolute;left:206px;top:649px;width:753px;height:1px;background:#FFFFFF;"></div><div style="position:absolute;left:958px;top:624px;width:1px;height:26px;background:#FFFFFF;"></div><div style="position:absolute;left:5px;top:632px;font-size:10.6px;line-height:1;color:#000;font-weight:normal;white-space:pre;">Filename:</div><div style="position:absolute;left:207px;top:632px;font-size:10.6px;line-height:1;color:#000;font-weight:normal;white-space:pre;">CH A</div><div style="position:absolute;left:240px;top:632px;font-size:10.6px;line-height:1;color:#000;font-weight:normal;white-space:pre;">dBSPL</div><div style="position:absolute;left:278px;top:632px;font-size:10.6px;line-height:1;color:#000;font-weight:normal;white-space:pre;">1/12 Octave</div><div style="position:absolute;left:347px;top:632px;font-size:10.6px;line-height:1;color:#000;font-weight:normal;white-space:pre;">48kHz</div><div style="position:absolute;left:385px;top:632px;font-size:10.6px;line-height:1;color:#000;font-weight:normal;white-space:pre;">8K</div><div style="position:absolute;left:406px;top:632px;font-size:10.6px;line-height:1;color:#000;font-weight:normal;white-space:pre;">Rectangular</div><div style="position:absolute;left:473px;top:632px;font-size:10.6px;line-height:1;color:#000;font-weight:normal;white-space:pre;">Start 0.00ms</div><div style="position:absolute;left:548px;top:632px;font-size:10.6px;line-height:1;color:#000;font-weight:normal;white-space:pre;">Stop 170.65ms</div><div style="position:absolute;left:631px;top:632px;font-size:10.6px;line-height:1;color:#000;font-weight:normal;white-space:pre;">FreqLO 5.86Hz</div><div style="position:absolute;left:715px;top:632px;font-size:10.6px;line-height:1;color:#000;font-weight:normal;white-space:pre;">Length 170.65ms</div><div style="position:absolute;left:6px;top:651px;font-size:12.6px;line-height:1;color:#000;font-weight:bold;white-space:pre;">Input A</div><div style="position:absolute;left:76px;top:651px;font-size:12px;line-height:1;color:#000;font-weight:bold;white-space:pre;">dBfs</div><div style="position:absolute;left:5px;top:663px;font-size:11.5px;line-height:1;color:#000;font-weight:bold;white-space:pre;letter-spacing:-0.3px;">-50</div><div style="position:absolute;left:25px;top:669px;width:1px;height:3px;background:#000;"></div><div style="position:absolute;left:35px;top:669px;width:1px;height:3px;background:#000;"></div><div style="position:absolute;left:45px;top:669px;width:1px;height:3px;background:#000;"></div><div style="position:absolute;left:56px;top:669px;width:1px;height:3px;background:#000;"></div><div style="position:absolute;left:73px;top:669px;width:1px;height:3px;background:#000;"></div><div style="position:absolute;left:90px;top:669px;width:1px;height:3px;background:#000;"></div><div style="position:absolute;left:94px;top:663px;font-size:11.5px;line-height:1;color:#000;font-weight:bold;white-space:pre;">0</div><div style="position:absolute;left:247px;top:651px;font-size:12.6px;line-height:1;color:#000;font-weight:bold;white-space:pre;">Input B</div><div style="position:absolute;left:317px;top:651px;font-size:12px;line-height:1;color:#000;font-weight:bold;white-space:pre;">dBfs</div><div style="position:absolute;left:246px;top:663px;font-size:11.5px;line-height:1;color:#000;font-weight:bold;white-space:pre;letter-spacing:-0.3px;">-50</div><div style="position:absolute;left:267px;top:669px;width:1px;height:3px;background:#000;"></div><div style="position:absolute;left:276px;top:669px;width:1px;height:3px;background:#000;"></div><div style="position:absolute;left:286px;top:669px;width:1px;height:3px;background:#000;"></div><div style="position:absolute;left:297px;top:669px;width:1px;height:3px;background:#000;"></div><div style="position:absolute;left:314px;top:669px;width:1px;height:3px;background:#000;"></div><div style="position:absolute;left:331px;top:669px;width:1px;height:3px;background:#000;"></div><div style="position:absolute;left:335px;top:663px;font-size:11.5px;line-height:1;color:#000;font-weight:bold;white-space:pre;">0</div><svg style="position:absolute;left:108px;top:653px;" width="16" height="9" viewBox="0 0 16 9" shape-rendering="crispEdges"><rect x="0" y="8" width="7" height="1" fill="#000"/><rect x="6" y="4" width="1" height="5" fill="#000"/><rect x="7" y="0" width="2" height="4" fill="#000"/><rect x="9" y="4" width="1" height="5" fill="#000"/><rect x="9" y="8" width="7" height="1" fill="#000"/></svg><svg style="position:absolute;left:349px;top:653px;" width="17" height="10" viewBox="0 0 17 10" shape-rendering="crispEdges"><rect x="1" y="9" width="7" height="1" fill="#fff"/><rect x="7" y="5" width="1" height="5" fill="#fff"/><rect x="8" y="1" width="2" height="4" fill="#fff"/><rect x="10" y="5" width="1" height="5" fill="#fff"/><rect x="10" y="9" width="7" height="1" fill="#fff"/><rect x="0" y="8" width="7" height="1" fill="#808080"/><rect x="6" y="4" width="1" height="5" fill="#808080"/><rect x="7" y="0" width="2" height="4" fill="#808080"/><rect x="9" y="4" width="1" height="5" fill="#808080"/><rect x="9" y="8" width="7" height="1" fill="#808080"/></svg><div style="position:absolute;left:129px;top:650px;width:60px;height:24px;background:#fff;"></div><div style="position:absolute;left:129px;top:650px;width:60px;height:1px;background:#808080;"></div><div style="position:absolute;left:129px;top:650px;width:1px;height:24px;background:#808080;"></div><div style="position:absolute;left:129px;top:652px;width:60px;text-align:center;font-size:14.5px;font-weight:normal;-webkit-text-stroke:0.6px #000;letter-spacing:0.3px;line-height:1;color:#000;white-space:pre">0 dBV</div><svg style="position:absolute;left:196px;top:658px;shape-rendering:auto" width="11" height="5" viewBox="0 0 11 5" shape-rendering="crispEdges"><path d="M0 5 L5.5 0 L11 5 Z" fill="#000"/></svg><svg style="position:absolute;left:221px;top:659px;shape-rendering:auto" width="11" height="5" viewBox="0 0 11 5" shape-rendering="crispEdges"><path d="M0 0 L5.5 5 L11 0 Z" fill="#000"/></svg><div style="position:absolute;left:241px;top:652px;width:1px;height:20px;background:#808080;"></div><div style="position:absolute;left:242px;top:652px;width:1px;height:20px;background:#FFFFFF;"></div><div style="position:absolute;left:370px;top:650px;width:60px;height:24px;background:#fff;"></div><div style="position:absolute;left:370px;top:650px;width:60px;height:1px;background:#808080;"></div><div style="position:absolute;left:370px;top:650px;width:1px;height:24px;background:#808080;"></div><div style="position:absolute;left:370px;top:652px;width:60px;text-align:center;font-size:14.5px;font-weight:normal;-webkit-text-stroke:0.6px #808080;letter-spacing:0.3px;line-height:1;color:#808080;white-space:pre">0 dBV</div><svg style="position:absolute;left:438px;top:659px;shape-rendering:auto" width="10" height="5" viewBox="0 0 10 5" shape-rendering="crispEdges"><path d="M0 5 L5.0 0 L10 5 Z" fill="#fff"/></svg><svg style="position:absolute;left:437px;top:658px;shape-rendering:auto" width="10" height="5" viewBox="0 0 10 5" shape-rendering="crispEdges"><path d="M0 5 L5.0 0 L10 5 Z" fill="#808080"/></svg><svg style="position:absolute;left:463px;top:659px;shape-rendering:auto" width="10" height="5" viewBox="0 0 10 5" shape-rendering="crispEdges"><path d="M0 0 L5.0 5 L10 0 Z" fill="#fff"/></svg><svg style="position:absolute;left:462px;top:658px;shape-rendering:auto" width="10" height="5" viewBox="0 0 10 5" shape-rendering="crispEdges"><path d="M0 0 L5.0 5 L10 0 Z" fill="#808080"/></svg><div style="position:absolute;left:483px;top:654px;font-size:11.5px;line-height:1;color:#808080;font-weight:normal;white-space:pre;text-shadow:1px 1px 0 #fff;letter-spacing:-0.5px;">A-B</div><div style="position:absolute;left:507px;top:652px;width:1px;height:20px;background:#808080;"></div><div style="position:absolute;left:508px;top:652px;width:1px;height:20px;background:#FFFFFF;"></div><svg style="position:absolute;left:515px;top:652px;shape-rendering:auto" width="16" height="18" viewBox="0 0 16 18" shape-rendering="crispEdges"><path d="M4.5 2 L6.5 4 H9.5 L11.5 2" stroke="#000050" stroke-width="1.2" fill="none"/><rect x="6.5" y="0.8" width="3" height="2.2" fill="#000050"/><rect x="6.5" y="3" width="3" height="1" fill="#FFFF80"/><path d="M1.5 11.5 L5.5 7.3 L10 11.8 L14.5 7" stroke="#000050" stroke-width="2.6" fill="none" stroke-linejoin="bevel"/><path d="M4.5 16 L6.5 14 H9.5 L11.5 16" stroke="#000050" stroke-width="1.2" fill="none"/><rect x="6.5" y="15" width="3" height="2.2" fill="#000050"/><rect x="6.5" y="14" width="3" height="1" fill="#FFFF80"/></svg><div style="position:absolute;left:538px;top:652px;width:1px;height:20px;background:#808080;"></div><div style="position:absolute;left:539px;top:652px;width:1px;height:20px;background:#FFFFFF;"></div><svg style="position:absolute;left:545px;top:652px;shape-rendering:auto" width="18" height="19" viewBox="0 0 18 19" shape-rendering="crispEdges"><path d="M10 6.5 H6 Q1.5 7 1.5 11.5 Q2 16 8 16 H10" stroke="#000" fill="none" stroke-width="1.3"/><path d="M7.5 4.5 L5.5 6.5 L7.5 8.5 M8.5 14 L10.5 16 L8.5 18" stroke="#000" fill="none" stroke-width="1.3"/><path d="M12.5 9 Q15 12 12.5 16" stroke="#000" fill="none" stroke-width="1.2" stroke-dasharray="1.5 1"/><path d="M14.5 0.5 V3 M13 3.5 H16 V7 H13 Z M11.5 8 H18" stroke="#000" fill="none" stroke-width="1.1"/></svg><div style="position:absolute;left:569px;top:652px;width:22px;height:20px;background:#D4D0C8;background-image:repeating-conic-gradient(#fff 0 25%,#D4D0C8 0 50%);background-size:2px 2px;"></div><svg style="position:absolute;left:570px;top:652px;shape-rendering:auto" width="18" height="19" viewBox="0 0 18 19" shape-rendering="crispEdges"><path d="M10 6.5 H6 Q1.5 7 1.5 11.5 Q2 16 8 16 H10" stroke="#808080" fill="none" stroke-width="1.3"/><path d="M7.5 4.5 L5.5 6.5 L7.5 8.5 M8.5 14 L10.5 16 L8.5 18" stroke="#808080" fill="none" stroke-width="1.3"/><rect x="11.5" y="2.5" width="5" height="3.5" fill="#fff" stroke="#808080"/><rect x="11.5" y="6" width="5" height="3.5" fill="#fff" stroke="#808080"/><path d="M14 10 V15" stroke="#808080" stroke-dasharray="1.5 1"/></svg><div style="position:absolute;left:594px;top:652px;width:1px;height:20px;background:#808080;"></div><div style="position:absolute;left:595px;top:652px;width:1px;height:20px;background:#FFFFFF;"></div><div style="position:absolute;left:603px;top:652px;font-size:13.5px;line-height:1;color:#000;font-weight:bold;white-space:pre;">Out</div><div style="position:absolute;left:632px;top:650px;width:82px;height:24px;background:#fff;"></div><div style="position:absolute;left:632px;top:650px;width:82px;height:1px;background:#808080;"></div><div style="position:absolute;left:632px;top:650px;width:1px;height:24px;background:#808080;"></div><div style="position:absolute;left:632px;top:652px;width:82px;text-align:center;font-size:14.5px;font-weight:normal;-webkit-text-stroke:0.6px #000;letter-spacing:0.3px;line-height:1;color:#000;white-space:pre">0.0 dBu</div><svg style="position:absolute;left:721px;top:659px;shape-rendering:auto" width="11" height="5" viewBox="0 0 11 5" shape-rendering="crispEdges"><path d="M0 0 L5.5 5 L11 0 Z" fill="#000"/></svg><svg style="position:absolute;left:745px;top:658px;shape-rendering:auto" width="11" height="5" viewBox="0 0 11 5" shape-rendering="crispEdges"><path d="M0 5 L5.5 0 L11 5 Z" fill="#000"/></svg><svg style="position:absolute;left:767px;top:652px;shape-rendering:auto" width="14" height="16" viewBox="0 0 14 16" shape-rendering="crispEdges"><path d="M3.5 5.5 L7 1.5 H8.5 L10 3.5 V12.5 L8.5 14.5 H7 L3.5 10.5 Z" fill="#C8C8C8" stroke="#000" stroke-width="1.1"/><ellipse cx="2.5" cy="8" rx="1.6" ry="2.4" fill="#D4D0C8" stroke="#000" stroke-width="1.1"/><ellipse cx="7.5" cy="8" rx="1.2" ry="2.2" fill="none" stroke="#000" stroke-width="1"/><path d="M6 2 V14" stroke="#000" stroke-width="1.1"/><path d="M12 4 V12" stroke="#000" stroke-width="1.3"/></svg><svg style="position:absolute;left:793px;top:661px;shape-rendering:auto" width="7" height="4" viewBox="0 0 7 4" shape-rendering="crispEdges"><path d="M0 0 H7 L3.5 3.5 Z" fill="#000"/></svg><svg style="position:absolute;left:806px;top:657px;" width="15" height="7" viewBox="0 0 15 7" shape-rendering="crispEdges"><rect x="0" y="0" width="15" height="2" fill="#000"/><rect x="0" y="5" width="4" height="2" fill="#000"/><rect x="5.5" y="5" width="4" height="2" fill="#000"/><rect x="11" y="5" width="4" height="2" fill="#000"/></svg><div style="position:absolute;left:829px;top:652px;width:1px;height:20px;background:#808080;"></div><div style="position:absolute;left:830px;top:652px;width:1px;height:20px;background:#FFFFFF;"></div><div style="position:absolute;left:833px;top:650px;width:25px;height:24px;background:#D4D0C8;background-image:repeating-conic-gradient(#fff 0 25%,#D4D0C8 0 50%);background-size:2px 2px;"></div><div style="position:absolute;left:833px;top:650px;width:25px;height:1px;background:#808080;"></div><div style="position:absolute;left:833px;top:650px;width:1px;height:24px;background:#808080;"></div><div style="position:absolute;left:833px;top:673px;width:25px;height:1px;background:#FFFFFF;"></div><div style="position:absolute;left:857px;top:650px;width:1px;height:24px;background:#FFFFFF;"></div><svg style="position:absolute;left:839px;top:654px;shape-rendering:auto" width="16" height="17" viewBox="0 0 16 17" shape-rendering="crispEdges"><circle cx="4" cy="3.5" r="3.3" fill="#00FF00" stroke="#000" stroke-width="0.9"/><rect x="2.7" y="6.8" width="2.6" height="6.5" fill="#000"/><path d="M4 13 V15.5 H11.5 V11" stroke="#000" fill="none" stroke-width="1.1"/><path d="M10.5 4.5 V1.5 Q11.5 0 12.5 1.5 V4.5" fill="#fff" stroke="#000" stroke-width="0.9"/><path d="M9 5.5 H14 L14.5 7 V9 L13.5 11 H9.5 L8.5 9 V7 Z" fill="#fff" stroke="#000" stroke-width="1"/><path d="M10 8.5 L11.5 10 L13 8.5" stroke="#000" fill="none" stroke-width="0.8"/></svg><svg style="position:absolute;left:864px;top:653px;shape-rendering:auto" width="15" height="17" viewBox="0 0 15 17" shape-rendering="crispEdges"><circle cx="4" cy="4" r="3.5" fill="#FF0000" stroke="#000" stroke-width="0.9"/><rect x="2.6" y="7.3" width="2.8" height="6" fill="#000"/><path d="M4 13 V15.5 H10.5 V12" stroke="#000" fill="none" stroke-width="1"/><rect x="8.5" y="0.5" width="5" height="4" fill="#fff" stroke="#000" stroke-width="0.9"/><rect x="8.5" y="4.5" width="5" height="4" fill="#fff" stroke="#000" stroke-width="0.9"/><path d="M9 9 V12 H12.5 V9 M11 10.5 V12" stroke="#000" fill="none" stroke-width="1"/></svg><svg style="position:absolute;left:886px;top:652px;shape-rendering:auto" width="20" height="20" viewBox="0 0 20 20" shape-rendering="crispEdges"><path d="M2.5 2.5 V15.5 H18.5 V2.5 H10.5 V1.5 H3.5 V2.5 Z" fill="#EEEE30" stroke="#000" stroke-width="1.1"/><path d="M3 3.5 H10" stroke="#000" stroke-width="0.9"/><path d="M5 7 L7 10 L12 5 M8.5 11.5 L10.5 14 L15 9.5" stroke="#000" stroke-width="1.7" fill="none"/><rect x="0.8" y="9" width="4" height="3" rx="1" fill="#000"/><rect x="1.5" y="10" width="2.5" height="9" fill="#000"/><path d="M2.7 10.5 V18" stroke="#A0A080" stroke-width="0.9"/></svg><div style="position:absolute;left:910px;top:652px;width:1px;height:20px;background:#808080;"></div><div style="position:absolute;left:911px;top:652px;width:1px;height:20px;background:#FFFFFF;"></div><svg style="position:absolute;left:918px;top:656px;shape-rendering:auto" width="17" height="10" viewBox="0 0 17 10" shape-rendering="crispEdges"><path d="M1 3 L4 0.5 H16 L13 3 Z" fill="#f0f0f0" stroke="#000" stroke-width="0.8"/><rect x="0.5" y="3" width="13" height="6" fill="#fff" stroke="#000" stroke-width="0.8"/><path d="M13.5 3 L16 0.5 V6 L13.5 9" fill="#C0C0C0" stroke="#000" stroke-width="0.8"/><rect x="2" y="5" width="8" height="2" fill="#C00000"/><rect x="5" y="5" width="2" height="1" fill="#fff"/></svg><svg style="position:absolute;left:943px;top:654px;shape-rendering:auto" width="16" height="15" viewBox="0 0 16 15" shape-rendering="crispEdges"><rect x="0.5" y="1.5" width="15" height="12" rx="3.5" fill="#fff" stroke="#000"/><path d="M1 6.5 V5 Q1 1.5 4.5 1.5 H11.5 Q15 1.5 15 5 V6.5 Z" fill="#606050"/><rect x="6.5" y="3.5" width="3" height="1.5" fill="#fff"/><path d="M1 6.5 H15" stroke="#000"/><path d="M3 10 H13" stroke="#000" stroke-dasharray="1 1"/></svg>
</body></html>
